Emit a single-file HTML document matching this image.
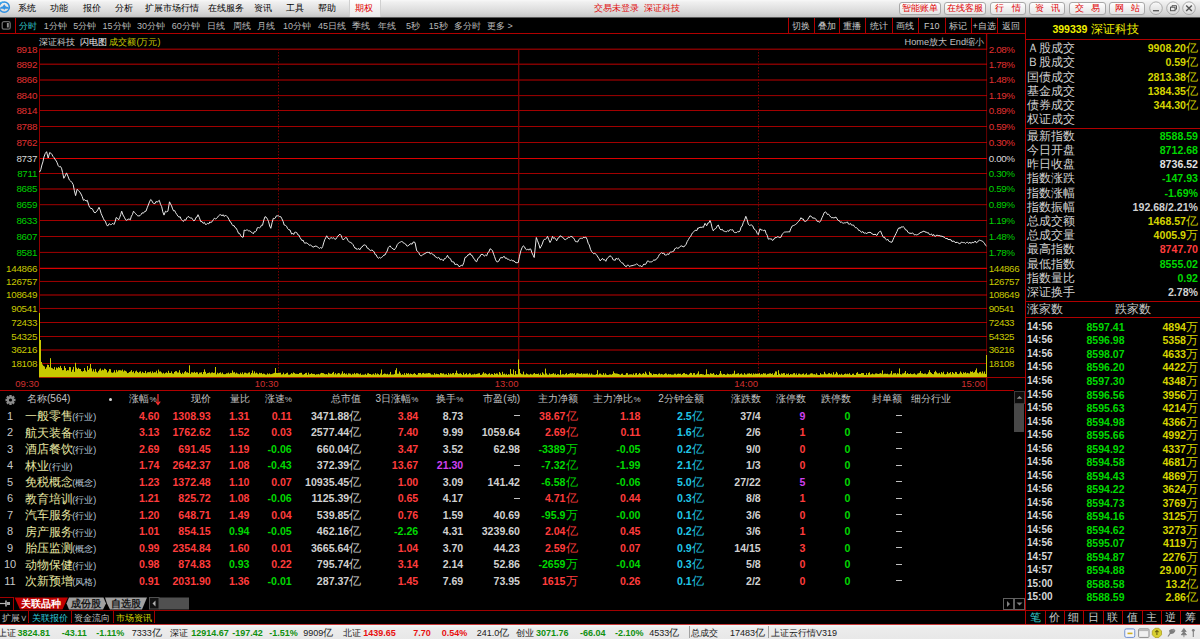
<!DOCTYPE html><html><head><meta charset="utf-8"><style>
html,body{margin:0;padding:0;background:#000;}
#r{position:relative;width:1200px;height:639px;overflow:hidden;background:#000;font-family:"Liberation Sans", sans-serif;}
.t{position:absolute;white-space:nowrap;}
.b{position:absolute;}

</style></head><body><div id="r">
<div class="b" style="left:0;top:0;width:1200px;height:17px;background:linear-gradient(#f8f8f8 0px,#f0f0f0 2px,#e0e0e0 9px,#d2d2d2 14px,#c4c4c4 17px);"></div>
<div class="b" style="left:0;top:17px;width:1200px;height:1px;background:#585858;"></div>
<svg class="b" style="left:0;top:0" width="16" height="17"><circle cx="4.25" cy="7.2" r="5.1" fill="none" stroke="#2e8fe0" stroke-width="1.5"/><path d="M-1 8.6 Q1 6.6 2.6 6.6 L4.25 4.3 L5.9 6.6 Q7.8 6.6 9.6 8.2 L9.6 8.8 L5.2 8.8 L4.25 10 L3.3 8.8 L-1 8.8 Z" fill="#3492e0"/><path d="M-1 3.5 Q1 2 3 2.2" stroke="#40b0f0" stroke-width="1.2" fill="none"/></svg>
<div class="t" style="left:18px;top:1.30px;color:#000000;font-size:9px;line-height:14px;">系统</div>
<div class="t" style="left:50px;top:1.30px;color:#000000;font-size:9px;line-height:14px;">功能</div>
<div class="t" style="left:82.5px;top:1.30px;color:#000000;font-size:9px;line-height:14px;">报价</div>
<div class="t" style="left:115px;top:1.30px;color:#000000;font-size:9px;line-height:14px;">分析</div>
<div class="t" style="left:145px;top:1.30px;color:#000000;font-size:9px;line-height:14px;">扩展市场行情</div>
<div class="t" style="left:208px;top:1.30px;color:#000000;font-size:9px;line-height:14px;">在线服务</div>
<div class="t" style="left:254px;top:1.30px;color:#000000;font-size:9px;line-height:14px;">资讯</div>
<div class="t" style="left:286px;top:1.30px;color:#000000;font-size:9px;line-height:14px;">工具</div>
<div class="t" style="left:318px;top:1.30px;color:#000000;font-size:9px;line-height:14px;">帮助</div>
<div class="b" style="left:349px;top:0px;width:30px;height:17px;background:linear-gradient(#ffffff,#e8e8e8);border-left:1px solid #d0d0d0;border-right:1px solid #d0d0d0;"></div>
<div class="t" style="left:355px;top:1.30px;color:#e00000;font-size:9px;line-height:14px;">期权</div>
<div class="t" style="left:537.00px;width:200px;top:1.30px;color:#e01010;font-size:9px;line-height:14px;text-align:center;">交易未登录&nbsp;&nbsp;深证科技</div>
<div class="b" style="left:899.3px;top:2px;width:40.0px;height:11px;border:1px solid #a8a8a8;border-radius:3px;background:linear-gradient(#ffffff,#e4e4e4);box-shadow:0 1px 0 #c8c8c8;"></div>
<div class="t" style="left:820.30px;width:200px;top:1.30px;color:#e00000;font-size:9px;line-height:14px;text-align:center;">智能账单</div>
<div class="b" style="left:944.4px;top:2px;width:39.9px;height:11px;border:1px solid #a8a8a8;border-radius:3px;background:linear-gradient(#ffffff,#e4e4e4);box-shadow:0 1px 0 #c8c8c8;"></div>
<div class="t" style="left:865.35px;width:200px;top:1.30px;color:#e00000;font-size:9px;line-height:14px;text-align:center;">在线客服</div>
<div class="b" style="left:989.7px;top:2px;width:34.3px;height:11px;border:1px solid #a8a8a8;border-radius:3px;background:linear-gradient(#ffffff,#e4e4e4);box-shadow:0 1px 0 #c8c8c8;"></div>
<div class="t" style="left:907.85px;width:200px;top:1.30px;color:#e00000;font-size:9px;line-height:14px;text-align:center;">行&nbsp;&nbsp;&nbsp;情</div>
<div class="b" style="left:1029.3px;top:2px;width:34.0px;height:11px;border:1px solid #a8a8a8;border-radius:3px;background:linear-gradient(#ffffff,#e4e4e4);box-shadow:0 1px 0 #c8c8c8;"></div>
<div class="t" style="left:947.30px;width:200px;top:1.30px;color:#e00000;font-size:9px;line-height:14px;text-align:center;">资&nbsp;&nbsp;&nbsp;讯</div>
<div class="b" style="left:1069.0px;top:2px;width:34.6px;height:11px;border:1px solid #a8a8a8;border-radius:3px;background:linear-gradient(#ffffff,#e4e4e4);box-shadow:0 1px 0 #c8c8c8;"></div>
<div class="t" style="left:987.30px;width:200px;top:1.30px;color:#e00000;font-size:9px;line-height:14px;text-align:center;">交&nbsp;&nbsp;&nbsp;易</div>
<div class="b" style="left:1109.3px;top:2px;width:34.0px;height:11px;border:1px solid #a8a8a8;border-radius:3px;background:linear-gradient(#ffffff,#e4e4e4);box-shadow:0 1px 0 #c8c8c8;"></div>
<div class="t" style="left:1027.30px;width:200px;top:1.30px;color:#e00000;font-size:9px;line-height:14px;text-align:center;">网&nbsp;&nbsp;&nbsp;站</div>
<svg class="b" style="left:1148.0px;top:0" width="16" height="17"><defs><linearGradient id="ggmin" x1="0" y1="0" x2="0" y2="1"><stop offset="0" stop-color="#fafafa"/><stop offset="1" stop-color="#d8d8d8"/></linearGradient></defs><g transform="translate(8,8.2)"><circle r="6.3" fill="url(#ggmin)" stroke="#9a9a9a" stroke-width="0.8"/><path d="M-3 2.5 H3" stroke="#555" stroke-width="1.3"/></g></svg>
<svg class="b" style="left:1164.7px;top:0" width="16" height="17"><defs><linearGradient id="ggres" x1="0" y1="0" x2="0" y2="1"><stop offset="0" stop-color="#fafafa"/><stop offset="1" stop-color="#d8d8d8"/></linearGradient></defs><g transform="translate(8,8.2)"><circle r="6.3" fill="url(#ggres)" stroke="#9a9a9a" stroke-width="0.8"/><rect x="-2.5" y="-1" width="4.5" height="3.5" fill="none" stroke="#555" stroke-width="1"/><path d="M-1 -1 V-2.5 H3.5 V1 H2" fill="none" stroke="#555" stroke-width="1"/></g></svg>
<svg class="b" style="left:1181.3px;top:0" width="16" height="17"><defs><linearGradient id="ggx" x1="0" y1="0" x2="0" y2="1"><stop offset="0" stop-color="#fafafa"/><stop offset="1" stop-color="#d8d8d8"/></linearGradient></defs><g transform="translate(8,8.2)"><circle r="6.3" fill="url(#ggx)" stroke="#9a9a9a" stroke-width="0.8"/><path d="M-2.8 -2.8 L2.8 2.8 M2.8 -2.8 L-2.8 2.8" stroke="#555" stroke-width="1.4"/></g></svg>
<div class="b" style="left:0;top:33px;width:1025px;height:1px;background:#b00000;"></div>
<div class="b" style="left:15px;top:18px;width:1px;height:15px;background:#b00000;"></div>
<svg class="b" style="left:0;top:17px" width="14" height="16"><rect x="2.2" y="4.6" width="8" height="7.6" rx="1.8" fill="none" stroke="#6c6c6c" stroke-width="1.3"/><rect x="6.9" y="6" width="1.9" height="4.5" fill="#909090"/></svg>
<div class="t" style="left:18.7px;top:18.50px;color:#30c8c8;font-size:9px;line-height:14px;">分时</div>
<div class="t" style="left:43.7px;top:18.50px;color:#b8b8b8;font-size:9px;line-height:14px;">1分钟</div>
<div class="t" style="left:73.3px;top:18.50px;color:#b8b8b8;font-size:9px;line-height:14px;">5分钟</div>
<div class="t" style="left:102.5px;top:18.50px;color:#b8b8b8;font-size:9px;line-height:14px;">15分钟</div>
<div class="t" style="left:137px;top:18.50px;color:#b8b8b8;font-size:9px;line-height:14px;">30分钟</div>
<div class="t" style="left:171.7px;top:18.50px;color:#b8b8b8;font-size:9px;line-height:14px;">60分钟</div>
<div class="t" style="left:206.5px;top:18.50px;color:#b8b8b8;font-size:9px;line-height:14px;">日线</div>
<div class="t" style="left:232.6px;top:18.50px;color:#b8b8b8;font-size:9px;line-height:14px;">周线</div>
<div class="t" style="left:257.4px;top:18.50px;color:#b8b8b8;font-size:9px;line-height:14px;">月线</div>
<div class="t" style="left:283px;top:18.50px;color:#b8b8b8;font-size:9px;line-height:14px;">10分钟</div>
<div class="t" style="left:317.9px;top:18.50px;color:#b8b8b8;font-size:9px;line-height:14px;">45日线</div>
<div class="t" style="left:351.7px;top:18.50px;color:#b8b8b8;font-size:9px;line-height:14px;">季线</div>
<div class="t" style="left:378.4px;top:18.50px;color:#b8b8b8;font-size:9px;line-height:14px;">年线</div>
<div class="t" style="left:405.9px;top:18.50px;color:#b8b8b8;font-size:9px;line-height:14px;">5秒</div>
<div class="t" style="left:428.7px;top:18.50px;color:#b8b8b8;font-size:9px;line-height:14px;">15秒</div>
<div class="t" style="left:453.5px;top:18.50px;color:#b8b8b8;font-size:9px;line-height:14px;">多分时</div>
<div class="t" style="left:487px;top:18.50px;color:#b8b8b8;font-size:9px;line-height:14px;">更多 &gt;</div>
<div class="b" style="left:787.8px;top:18px;width:1px;height:15px;background:#b00000;"></div>
<div class="t" style="left:700.80px;width:200px;top:18.50px;color:#c8c8c8;font-size:9px;line-height:14px;text-align:center;">切换</div>
<div class="b" style="left:813.8px;top:18px;width:1px;height:15px;background:#b00000;"></div>
<div class="t" style="left:726.55px;width:200px;top:18.50px;color:#c8c8c8;font-size:9px;line-height:14px;text-align:center;">叠加</div>
<div class="b" style="left:839.3px;top:18px;width:1px;height:15px;background:#b00000;"></div>
<div class="t" style="left:752.30px;width:200px;top:18.50px;color:#c8c8c8;font-size:9px;line-height:14px;text-align:center;">重播</div>
<div class="b" style="left:865.3px;top:18px;width:1px;height:15px;background:#b00000;"></div>
<div class="t" style="left:778.85px;width:200px;top:18.50px;color:#c8c8c8;font-size:9px;line-height:14px;text-align:center;">统计</div>
<div class="b" style="left:892.4px;top:18px;width:1px;height:15px;background:#b00000;"></div>
<div class="t" style="left:805.40px;width:200px;top:18.50px;color:#c8c8c8;font-size:9px;line-height:14px;text-align:center;">画线</div>
<div class="b" style="left:918.4px;top:18px;width:1px;height:15px;background:#b00000;"></div>
<div class="t" style="left:831.75px;width:200px;top:18.50px;color:#c8c8c8;font-size:9px;line-height:14px;text-align:center;">F10</div>
<div class="b" style="left:945.1px;top:18px;width:1px;height:15px;background:#b00000;"></div>
<div class="t" style="left:858.10px;width:200px;top:18.50px;color:#c8c8c8;font-size:9px;line-height:14px;text-align:center;">标记</div>
<div class="b" style="left:971.1px;top:18px;width:1px;height:15px;background:#b00000;"></div>
<div class="t" style="left:884.10px;width:200px;top:18.50px;color:#c8c8c8;font-size:9px;line-height:14px;text-align:center;">+自选</div>
<div class="b" style="left:997.1px;top:18px;width:1px;height:15px;background:#b00000;"></div>
<div class="t" style="left:911.15px;width:200px;top:18.50px;color:#c8c8c8;font-size:9px;line-height:14px;text-align:center;">返回</div>
<div class="b" style="left:1025px;top:18px;width:1px;height:606px;background:#b00000;"></div>
<div class="b" style="left:1025px;top:39px;width:175px;height:1px;background:#b00000;"></div>
<div class="t" style="left:1052.4px;top:21.50px;color:#f0f000;font-size:12px;line-height:14px;"><b style="font-size:10.5px">399339</b> 深证科技</div>
<div class="t" style="left:1027px;top:41.30px;color:#d0d0d0;font-size:12px;line-height:14px;">Ａ股成交</div>
<div class="t" style="right:2.00px;top:41.30px;color:#d4d400;font-size:11px;line-height:14px;text-align:right;"><b style="font-size:10.6px">9908.20</b><span style="font-size:12px">亿</span></div>
<div class="t" style="left:1027px;top:55.40px;color:#d0d0d0;font-size:12px;line-height:14px;">Ｂ股成交</div>
<div class="t" style="right:2.00px;top:55.40px;color:#d4d400;font-size:11px;line-height:14px;text-align:right;"><b style="font-size:10.6px">0.59</b><span style="font-size:12px">亿</span></div>
<div class="t" style="left:1027px;top:69.50px;color:#d0d0d0;font-size:12px;line-height:14px;">国债成交</div>
<div class="t" style="right:2.00px;top:69.50px;color:#d4d400;font-size:11px;line-height:14px;text-align:right;"><b style="font-size:10.6px">2813.38</b><span style="font-size:12px">亿</span></div>
<div class="t" style="left:1027px;top:83.60px;color:#d0d0d0;font-size:12px;line-height:14px;">基金成交</div>
<div class="t" style="right:2.00px;top:83.60px;color:#d4d400;font-size:11px;line-height:14px;text-align:right;"><b style="font-size:10.6px">1384.35</b><span style="font-size:12px">亿</span></div>
<div class="t" style="left:1027px;top:97.70px;color:#d0d0d0;font-size:12px;line-height:14px;">债券成交</div>
<div class="t" style="right:2.00px;top:97.70px;color:#d4d400;font-size:11px;line-height:14px;text-align:right;"><b style="font-size:10.6px">344.30</b><span style="font-size:12px">亿</span></div>
<div class="t" style="left:1027px;top:111.80px;color:#d0d0d0;font-size:12px;line-height:14px;">权证成交</div>
<div class="b" style="left:1025px;top:128px;width:175px;height:1px;background:#b00000;"></div>
<div class="t" style="left:1027px;top:128.80px;color:#d0d0d0;font-size:12px;line-height:14px;">最新指数</div>
<div class="t" style="right:2.00px;top:128.80px;color:#00d800;font-size:10.6px;line-height:14px;text-align:right;font-weight:bold;">8588.59</div>
<div class="t" style="left:1027px;top:143.00px;color:#d0d0d0;font-size:12px;line-height:14px;">今日开盘</div>
<div class="t" style="right:2.00px;top:143.00px;color:#00d800;font-size:10.6px;line-height:14px;text-align:right;font-weight:bold;">8712.68</div>
<div class="t" style="left:1027px;top:157.20px;color:#d0d0d0;font-size:12px;line-height:14px;">昨日收盘</div>
<div class="t" style="right:2.00px;top:157.20px;color:#e0e0e0;font-size:10.6px;line-height:14px;text-align:right;font-weight:bold;">8736.52</div>
<div class="t" style="left:1027px;top:171.40px;color:#d0d0d0;font-size:12px;line-height:14px;">指数涨跌</div>
<div class="t" style="right:2.00px;top:171.40px;color:#00d800;font-size:10.6px;line-height:14px;text-align:right;font-weight:bold;">-147.93</div>
<div class="t" style="left:1027px;top:185.60px;color:#d0d0d0;font-size:12px;line-height:14px;">指数涨幅</div>
<div class="t" style="right:2.00px;top:185.60px;color:#00d800;font-size:10.6px;line-height:14px;text-align:right;font-weight:bold;">-1.69%</div>
<div class="t" style="left:1027px;top:199.80px;color:#d0d0d0;font-size:12px;line-height:14px;">指数振幅</div>
<div class="t" style="right:2.00px;top:199.80px;color:#d0d0d0;font-size:10.6px;line-height:14px;text-align:right;font-weight:bold;">192.68/2.21%</div>
<div class="t" style="left:1027px;top:214.00px;color:#d0d0d0;font-size:12px;line-height:14px;">总成交额</div>
<div class="t" style="right:2.00px;top:214.00px;color:#d4d400;font-size:11px;line-height:14px;text-align:right;"><b style="font-size:10.6px">1468.57</b><span style="font-size:12px">亿</span></div>
<div class="t" style="left:1027px;top:228.20px;color:#d0d0d0;font-size:12px;line-height:14px;">总成交量</div>
<div class="t" style="right:2.00px;top:228.20px;color:#d4d400;font-size:11px;line-height:14px;text-align:right;"><b style="font-size:10.6px">4005.9</b><span style="font-size:12px">万</span></div>
<div class="t" style="left:1027px;top:242.40px;color:#d0d0d0;font-size:12px;line-height:14px;">最高指数</div>
<div class="t" style="right:2.00px;top:242.40px;color:#ff3c3c;font-size:10.6px;line-height:14px;text-align:right;font-weight:bold;">8747.70</div>
<div class="t" style="left:1027px;top:256.60px;color:#d0d0d0;font-size:12px;line-height:14px;">最低指数</div>
<div class="t" style="right:2.00px;top:256.60px;color:#00d800;font-size:10.6px;line-height:14px;text-align:right;font-weight:bold;">8555.02</div>
<div class="t" style="left:1027px;top:270.80px;color:#d0d0d0;font-size:12px;line-height:14px;">指数量比</div>
<div class="t" style="right:2.00px;top:270.80px;color:#00d800;font-size:10.6px;line-height:14px;text-align:right;font-weight:bold;">0.92</div>
<div class="t" style="left:1027px;top:285.00px;color:#d0d0d0;font-size:12px;line-height:14px;">深证换手</div>
<div class="t" style="right:2.00px;top:285.00px;color:#d0d0d0;font-size:10.6px;line-height:14px;text-align:right;font-weight:bold;">2.78%</div>
<div class="b" style="left:1025px;top:301px;width:175px;height:1px;background:#b00000;"></div>
<div class="t" style="left:1027px;top:302.20px;color:#c8c8c8;font-size:12px;line-height:14px;">涨家数</div>
<div class="t" style="left:1115px;top:302.20px;color:#c8c8c8;font-size:12px;line-height:14px;">跌家数</div>
<div class="b" style="left:1025px;top:317px;width:175px;height:1px;background:#b00000;"></div>
<div class="t" style="left:1027px;top:319.90px;color:#d8d8d8;font-size:10px;line-height:14px;font-weight:bold;">14:56</div>
<div class="t" style="right:75.50px;top:319.90px;color:#00d800;font-size:10.5px;line-height:14px;text-align:right;font-weight:bold;">8597.41</div>
<div class="t" style="right:2.00px;top:319.90px;color:#d4d400;font-size:11px;line-height:14px;text-align:right;"><b style="font-size:10.6px">4894</b><span style="font-size:12px">万</span></div>
<div class="t" style="left:1027px;top:333.42px;color:#d8d8d8;font-size:10px;line-height:14px;font-weight:bold;">14:56</div>
<div class="t" style="right:75.50px;top:333.42px;color:#00d800;font-size:10.5px;line-height:14px;text-align:right;font-weight:bold;">8596.98</div>
<div class="t" style="right:2.00px;top:333.42px;color:#d4d400;font-size:11px;line-height:14px;text-align:right;"><b style="font-size:10.6px">5358</b><span style="font-size:12px">万</span></div>
<div class="t" style="left:1027px;top:346.95px;color:#d8d8d8;font-size:10px;line-height:14px;font-weight:bold;">14:56</div>
<div class="t" style="right:75.50px;top:346.95px;color:#00d800;font-size:10.5px;line-height:14px;text-align:right;font-weight:bold;">8598.07</div>
<div class="t" style="right:2.00px;top:346.95px;color:#d4d400;font-size:11px;line-height:14px;text-align:right;"><b style="font-size:10.6px">4633</b><span style="font-size:12px">万</span></div>
<div class="t" style="left:1027px;top:360.47px;color:#d8d8d8;font-size:10px;line-height:14px;font-weight:bold;">14:56</div>
<div class="t" style="right:75.50px;top:360.47px;color:#00d800;font-size:10.5px;line-height:14px;text-align:right;font-weight:bold;">8596.20</div>
<div class="t" style="right:2.00px;top:360.47px;color:#d4d400;font-size:11px;line-height:14px;text-align:right;"><b style="font-size:10.6px">4422</b><span style="font-size:12px">万</span></div>
<div class="t" style="left:1027px;top:374.00px;color:#d8d8d8;font-size:10px;line-height:14px;font-weight:bold;">14:56</div>
<div class="t" style="right:75.50px;top:374.00px;color:#00d800;font-size:10.5px;line-height:14px;text-align:right;font-weight:bold;">8597.30</div>
<div class="t" style="right:2.00px;top:374.00px;color:#d4d400;font-size:11px;line-height:14px;text-align:right;"><b style="font-size:10.6px">4348</b><span style="font-size:12px">万</span></div>
<div class="t" style="left:1027px;top:387.52px;color:#d8d8d8;font-size:10px;line-height:14px;font-weight:bold;">14:56</div>
<div class="t" style="right:75.50px;top:387.52px;color:#00d800;font-size:10.5px;line-height:14px;text-align:right;font-weight:bold;">8596.56</div>
<div class="t" style="right:2.00px;top:387.52px;color:#d4d400;font-size:11px;line-height:14px;text-align:right;"><b style="font-size:10.6px">3956</b><span style="font-size:12px">万</span></div>
<div class="t" style="left:1027px;top:401.05px;color:#d8d8d8;font-size:10px;line-height:14px;font-weight:bold;">14:56</div>
<div class="t" style="right:75.50px;top:401.05px;color:#00d800;font-size:10.5px;line-height:14px;text-align:right;font-weight:bold;">8595.63</div>
<div class="t" style="right:2.00px;top:401.05px;color:#d4d400;font-size:11px;line-height:14px;text-align:right;"><b style="font-size:10.6px">4214</b><span style="font-size:12px">万</span></div>
<div class="t" style="left:1027px;top:414.57px;color:#d8d8d8;font-size:10px;line-height:14px;font-weight:bold;">14:56</div>
<div class="t" style="right:75.50px;top:414.57px;color:#00d800;font-size:10.5px;line-height:14px;text-align:right;font-weight:bold;">8594.98</div>
<div class="t" style="right:2.00px;top:414.57px;color:#d4d400;font-size:11px;line-height:14px;text-align:right;"><b style="font-size:10.6px">4366</b><span style="font-size:12px">万</span></div>
<div class="t" style="left:1027px;top:428.10px;color:#d8d8d8;font-size:10px;line-height:14px;font-weight:bold;">14:56</div>
<div class="t" style="right:75.50px;top:428.10px;color:#00d800;font-size:10.5px;line-height:14px;text-align:right;font-weight:bold;">8595.66</div>
<div class="t" style="right:2.00px;top:428.10px;color:#d4d400;font-size:11px;line-height:14px;text-align:right;"><b style="font-size:10.6px">4992</b><span style="font-size:12px">万</span></div>
<div class="t" style="left:1027px;top:441.62px;color:#d8d8d8;font-size:10px;line-height:14px;font-weight:bold;">14:56</div>
<div class="t" style="right:75.50px;top:441.62px;color:#00d800;font-size:10.5px;line-height:14px;text-align:right;font-weight:bold;">8594.92</div>
<div class="t" style="right:2.00px;top:441.62px;color:#d4d400;font-size:11px;line-height:14px;text-align:right;"><b style="font-size:10.6px">4337</b><span style="font-size:12px">万</span></div>
<div class="t" style="left:1027px;top:455.15px;color:#d8d8d8;font-size:10px;line-height:14px;font-weight:bold;">14:56</div>
<div class="t" style="right:75.50px;top:455.15px;color:#00d800;font-size:10.5px;line-height:14px;text-align:right;font-weight:bold;">8594.58</div>
<div class="t" style="right:2.00px;top:455.15px;color:#d4d400;font-size:11px;line-height:14px;text-align:right;"><b style="font-size:10.6px">4681</b><span style="font-size:12px">万</span></div>
<div class="t" style="left:1027px;top:468.67px;color:#d8d8d8;font-size:10px;line-height:14px;font-weight:bold;">14:56</div>
<div class="t" style="right:75.50px;top:468.67px;color:#00d800;font-size:10.5px;line-height:14px;text-align:right;font-weight:bold;">8594.43</div>
<div class="t" style="right:2.00px;top:468.67px;color:#d4d400;font-size:11px;line-height:14px;text-align:right;"><b style="font-size:10.6px">4869</b><span style="font-size:12px">万</span></div>
<div class="t" style="left:1027px;top:482.20px;color:#d8d8d8;font-size:10px;line-height:14px;font-weight:bold;">14:56</div>
<div class="t" style="right:75.50px;top:482.20px;color:#00d800;font-size:10.5px;line-height:14px;text-align:right;font-weight:bold;">8594.22</div>
<div class="t" style="right:2.00px;top:482.20px;color:#d4d400;font-size:11px;line-height:14px;text-align:right;"><b style="font-size:10.6px">3624</b><span style="font-size:12px">万</span></div>
<div class="t" style="left:1027px;top:495.73px;color:#d8d8d8;font-size:10px;line-height:14px;font-weight:bold;">14:56</div>
<div class="t" style="right:75.50px;top:495.73px;color:#00d800;font-size:10.5px;line-height:14px;text-align:right;font-weight:bold;">8594.73</div>
<div class="t" style="right:2.00px;top:495.73px;color:#d4d400;font-size:11px;line-height:14px;text-align:right;"><b style="font-size:10.6px">3769</b><span style="font-size:12px">万</span></div>
<div class="t" style="left:1027px;top:509.25px;color:#d8d8d8;font-size:10px;line-height:14px;font-weight:bold;">14:56</div>
<div class="t" style="right:75.50px;top:509.25px;color:#00d800;font-size:10.5px;line-height:14px;text-align:right;font-weight:bold;">8594.16</div>
<div class="t" style="right:2.00px;top:509.25px;color:#d4d400;font-size:11px;line-height:14px;text-align:right;"><b style="font-size:10.6px">3125</b><span style="font-size:12px">万</span></div>
<div class="t" style="left:1027px;top:522.77px;color:#d8d8d8;font-size:10px;line-height:14px;font-weight:bold;">14:56</div>
<div class="t" style="right:75.50px;top:522.77px;color:#00d800;font-size:10.5px;line-height:14px;text-align:right;font-weight:bold;">8594.62</div>
<div class="t" style="right:2.00px;top:522.77px;color:#d4d400;font-size:11px;line-height:14px;text-align:right;"><b style="font-size:10.6px">3273</b><span style="font-size:12px">万</span></div>
<div class="t" style="left:1027px;top:536.30px;color:#d8d8d8;font-size:10px;line-height:14px;font-weight:bold;">14:56</div>
<div class="t" style="right:75.50px;top:536.30px;color:#00d800;font-size:10.5px;line-height:14px;text-align:right;font-weight:bold;">8595.07</div>
<div class="t" style="right:2.00px;top:536.30px;color:#d4d400;font-size:11px;line-height:14px;text-align:right;"><b style="font-size:10.6px">4119</b><span style="font-size:12px">万</span></div>
<div class="t" style="left:1027px;top:549.83px;color:#d8d8d8;font-size:10px;line-height:14px;font-weight:bold;">14:57</div>
<div class="t" style="right:75.50px;top:549.83px;color:#00d800;font-size:10.5px;line-height:14px;text-align:right;font-weight:bold;">8594.87</div>
<div class="t" style="right:2.00px;top:549.83px;color:#d4d400;font-size:11px;line-height:14px;text-align:right;"><b style="font-size:10.6px">2276</b><span style="font-size:12px">万</span></div>
<div class="t" style="left:1027px;top:563.35px;color:#d8d8d8;font-size:10px;line-height:14px;font-weight:bold;">14:57</div>
<div class="t" style="right:75.50px;top:563.35px;color:#00d800;font-size:10.5px;line-height:14px;text-align:right;font-weight:bold;">8594.88</div>
<div class="t" style="right:2.00px;top:563.35px;color:#d4d400;font-size:11px;line-height:14px;text-align:right;"><b style="font-size:10.6px">29.00</b><span style="font-size:12px">万</span></div>
<div class="t" style="left:1027px;top:576.88px;color:#d8d8d8;font-size:10px;line-height:14px;font-weight:bold;">15:00</div>
<div class="t" style="right:75.50px;top:576.88px;color:#00d800;font-size:10.5px;line-height:14px;text-align:right;font-weight:bold;">8588.58</div>
<div class="t" style="right:2.00px;top:576.88px;color:#d4d400;font-size:11px;line-height:14px;text-align:right;"><b style="font-size:10.6px">13.2</b><span style="font-size:12px">亿</span></div>
<div class="t" style="left:1027px;top:590.40px;color:#d8d8d8;font-size:10px;line-height:14px;font-weight:bold;">15:00</div>
<div class="t" style="right:75.50px;top:590.40px;color:#00d800;font-size:10.5px;line-height:14px;text-align:right;font-weight:bold;">8588.59</div>
<div class="t" style="right:2.00px;top:590.40px;color:#d4d400;font-size:11px;line-height:14px;text-align:right;"><b style="font-size:10.6px">2.86</b><span style="font-size:12px">亿</span></div>
<div class="b" style="left:1025px;top:610px;width:175px;height:1px;background:#b00000;"></div>
<div class="b" style="left:1044.5px;top:610px;width:1px;height:14px;background:#b00000;"></div>
<div class="t" style="left:935.10px;width:200px;top:610.30px;color:#30c8c8;font-size:11px;line-height:14px;text-align:center;">笔</div>
<div class="b" style="left:1063.9px;top:610px;width:1px;height:14px;background:#b00000;"></div>
<div class="t" style="left:954.50px;width:200px;top:610.30px;color:#c8c8c8;font-size:11px;line-height:14px;text-align:center;">价</div>
<div class="b" style="left:1083.3px;top:610px;width:1px;height:14px;background:#b00000;"></div>
<div class="t" style="left:973.90px;width:200px;top:610.30px;color:#c8c8c8;font-size:11px;line-height:14px;text-align:center;">细</div>
<div class="b" style="left:1102.7px;top:610px;width:1px;height:14px;background:#b00000;"></div>
<div class="t" style="left:993.30px;width:200px;top:610.30px;color:#c8c8c8;font-size:11px;line-height:14px;text-align:center;">日</div>
<div class="b" style="left:1122.1px;top:610px;width:1px;height:14px;background:#b00000;"></div>
<div class="t" style="left:1012.70px;width:200px;top:610.30px;color:#c8c8c8;font-size:11px;line-height:14px;text-align:center;">联</div>
<div class="b" style="left:1141.5px;top:610px;width:1px;height:14px;background:#b00000;"></div>
<div class="t" style="left:1032.10px;width:200px;top:610.30px;color:#c8c8c8;font-size:11px;line-height:14px;text-align:center;">值</div>
<div class="b" style="left:1160.9px;top:610px;width:1px;height:14px;background:#b00000;"></div>
<div class="t" style="left:1051.50px;width:200px;top:610.30px;color:#c8c8c8;font-size:11px;line-height:14px;text-align:center;">主</div>
<div class="b" style="left:1180.3px;top:610px;width:1px;height:14px;background:#b00000;"></div>
<div class="t" style="left:1070.90px;width:200px;top:610.30px;color:#c8c8c8;font-size:11px;line-height:14px;text-align:center;">逆</div>
<div class="b" style="left:1199.7px;top:610px;width:1px;height:14px;background:#b00000;"></div>
<div class="t" style="left:1090.30px;width:200px;top:610.30px;color:#c8c8c8;font-size:11px;line-height:14px;text-align:center;">筹</div>
<svg class="b" style="left:0;top:0" width="1200" height="639">
<line x1="39" y1="49.30" x2="987" y2="49.30" stroke="#800000" stroke-width="1.4"/>
<line x1="39" y1="64.30" x2="987" y2="64.30" stroke="#800000" stroke-width="1.4"/>
<line x1="39" y1="80.00" x2="987" y2="80.00" stroke="#800000" stroke-width="1.4"/>
<line x1="39" y1="95.60" x2="987" y2="95.60" stroke="#a00000" stroke-width="1.0"/>
<line x1="39" y1="110.50" x2="987" y2="110.50" stroke="#a00000" stroke-width="1.0"/>
<line x1="39" y1="126.50" x2="987" y2="126.50" stroke="#a00000" stroke-width="1.0"/>
<line x1="39" y1="142.50" x2="987" y2="142.50" stroke="#a00000" stroke-width="1.0"/>
<line x1="39" y1="158.50" x2="987" y2="158.50" stroke="#d80000" stroke-width="1.2"/>
<line x1="39" y1="173.50" x2="987" y2="173.50" stroke="#a00000" stroke-width="1.0"/>
<line x1="39" y1="189.00" x2="987" y2="189.00" stroke="#800000" stroke-width="1.4"/>
<line x1="39" y1="204.70" x2="987" y2="204.70" stroke="#a00000" stroke-width="1.0"/>
<line x1="39" y1="220.50" x2="987" y2="220.50" stroke="#a00000" stroke-width="1.0"/>
<line x1="39" y1="236.50" x2="987" y2="236.50" stroke="#a00000" stroke-width="1.0"/>
<line x1="39" y1="252.40" x2="987" y2="252.40" stroke="#a00000" stroke-width="1.0"/>
<line x1="39" y1="268.30" x2="987" y2="268.30" stroke="#d80000" stroke-width="1.2"/>
<line x1="39" y1="281.45" x2="987" y2="281.45" stroke="#a00000" stroke-width="1.0"/>
<line x1="39" y1="295.00" x2="987" y2="295.00" stroke="#800000" stroke-width="1.4"/>
<line x1="39" y1="308.45" x2="987" y2="308.45" stroke="#a00000" stroke-width="1.0"/>
<line x1="39" y1="322.50" x2="987" y2="322.50" stroke="#a00000" stroke-width="1.0"/>
<line x1="39" y1="336.50" x2="987" y2="336.50" stroke="#a00000" stroke-width="1.0"/>
<line x1="39" y1="350.00" x2="987" y2="350.00" stroke="#800000" stroke-width="1.4"/>
<line x1="39" y1="363.50" x2="987" y2="363.50" stroke="#a00000" stroke-width="1.0"/>
<line x1="39.5" y1="49" x2="39.5" y2="377.6" stroke="#900000" stroke-width="1"/>
<line x1="986.6" y1="34" x2="986.6" y2="49.5" stroke="#a00000" stroke-width="1.3"/>
<line x1="986.6" y1="49.5" x2="986.6" y2="377.6" stroke="#d00000" stroke-width="1" stroke-dasharray="1 1"/>
<line x1="986.6" y1="377.6" x2="986.6" y2="391" stroke="#a00000" stroke-width="1.3"/>
<line x1="39" y1="377.5" x2="1025" y2="377.5" stroke="#a00000" stroke-width="1.2"/>
<line x1="518.7" y1="49" x2="518.7" y2="377.5" stroke="#800000" stroke-width="1.3"/>
<line x1="278.5" y1="49" x2="278.5" y2="377.5" stroke="#780000" stroke-width="1" stroke-dasharray="1.5 1.5"/>
<line x1="758.5" y1="49" x2="758.5" y2="377.5" stroke="#780000" stroke-width="1" stroke-dasharray="1.5 1.5"/>
<path d="M39.5 377.2V313.0 M40.5 377.2V340.0 M41.5 377.2V362.0 M42.5 377.2V364.5 M43.5 377.2V365.8 M44.5 377.2V366.5 M45.5 377.2V368.8 M46.5 377.2V367.3 M47.5 377.2V364.7 M48.5 377.2V365.0 M49.5 377.2V367.2 M50.5 377.2V358.2 M51.5 377.2V367.8 M52.5 377.2V368.3 M53.5 377.2V369.1 M54.5 377.2V367.1 M55.5 377.2V369.8 M56.5 377.2V367.5 M57.5 377.2V368.3 M58.5 377.2V367.0 M59.5 377.2V367.8 M60.5 377.2V365.9 M61.5 377.2V368.1 M62.5 377.2V370.2 M63.5 377.2V370.1 M64.5 377.2V366.1 M65.5 377.2V368.0 M66.5 377.2V370.8 M67.5 377.2V370.1 M68.5 377.2V370.3 M69.5 377.2V367.0 M70.5 377.2V367.2 M71.5 377.2V371.8 M72.5 377.2V369.6 M73.5 377.2V366.9 M74.5 377.2V371.8 M75.5 377.2V362.8 M76.5 377.2V367.7 M77.5 377.2V369.1 M78.5 377.2V367.9 M79.5 377.2V368.9 M80.5 377.2V369.0 M81.5 377.2V371.1 M82.5 377.2V371.6 M83.5 377.2V371.0 M84.5 377.2V368.0 M85.5 377.2V370.4 M86.5 377.2V371.6 M87.5 377.2V366.0 M88.5 377.2V370.0 M89.5 377.2V368.4 M90.5 377.2V364.0 M91.5 377.2V368.4 M92.5 377.2V371.4 M93.5 377.2V369.4 M94.5 377.2V371.7 M95.5 377.2V368.9 M96.5 377.2V371.7 M97.5 377.2V372.6 M98.5 377.2V371.1 M99.5 377.2V369.5 M100.5 377.2V368.5 M101.5 377.2V370.6 M102.5 377.2V369.7 M103.5 377.2V370.2 M104.5 377.2V368.6 M105.5 377.2V369.1 M106.5 377.2V370.1 M107.5 377.2V372.5 M108.5 377.2V371.3 M109.5 377.2V369.1 M110.5 377.2V369.2 M111.5 377.2V372.4 M112.5 377.2V372.8 M113.5 377.2V372.3 M114.5 377.2V370.3 M115.5 377.2V372.5 M116.5 377.2V369.9 M117.5 377.2V371.6 M118.5 377.2V370.3 M119.5 377.2V370.2 M120.5 377.2V370.3 M121.5 377.2V370.6 M122.5 377.2V369.6 M123.5 377.2V371.5 M124.5 377.2V370.4 M125.5 377.2V370.9 M126.5 377.2V371.6 M127.5 377.2V373.1 M128.5 377.2V372.8 M129.5 377.2V372.0 M130.5 377.2V371.4 M131.5 377.2V370.1 M132.5 377.2V372.2 M133.5 377.2V371.2 M134.5 377.2V373.2 M135.5 377.2V371.4 M136.5 377.2V370.6 M137.5 377.2V372.0 M138.5 377.2V372.8 M139.5 377.2V371.8 M140.5 377.2V371.3 M141.5 377.2V373.3 M142.5 377.2V371.8 M143.5 377.2V372.7 M144.5 377.2V373.0 M145.5 377.2V370.9 M146.5 377.2V373.3 M147.5 377.2V372.3 M148.5 377.2V372.2 M149.5 377.2V372.2 M150.5 377.2V371.5 M151.5 377.2V373.2 M152.5 377.2V371.4 M153.5 377.2V372.8 M154.5 377.2V372.2 M155.5 377.2V372.4 M156.5 377.2V370.7 M157.5 377.2V373.3 M158.5 377.2V369.6 M159.5 377.2V371.6 M160.5 377.2V371.4 M161.5 377.2V372.4 M162.5 377.2V373.5 M163.5 377.2V372.7 M164.5 377.2V373.7 M165.5 377.2V372.9 M166.5 377.2V372.3 M167.5 377.2V373.1 M168.5 377.2V370.8 M169.5 377.2V372.9 M170.5 377.2V373.0 M171.5 377.2V371.4 M172.5 377.2V373.4 M173.5 377.2V373.7 M174.5 377.2V372.0 M175.5 377.2V371.2 M176.5 377.2V371.2 M177.5 377.2V372.5 M178.5 377.2V372.5 M179.5 377.2V370.2 M180.5 377.2V372.8 M181.5 377.2V374.0 M182.5 377.2V372.6 M183.5 377.2V373.7 M184.5 377.2V372.2 M185.5 377.2V371.0 M186.5 377.2V372.4 M187.5 377.2V372.3 M188.5 377.2V373.0 M189.5 377.2V365.3 M190.5 377.2V373.8 M191.5 377.2V372.3 M192.5 377.2V372.4 M193.5 377.2V372.7 M194.5 377.2V371.8 M195.5 377.2V372.9 M196.5 377.2V372.2 M197.5 377.2V372.4 M198.5 377.2V374.1 M199.5 377.2V372.7 M200.5 377.2V372.6 M201.5 377.2V372.3 M202.5 377.2V374.1 M203.5 377.2V372.0 M204.5 377.2V369.4 M205.5 377.2V371.8 M206.5 377.2V373.8 M207.5 377.2V373.1 M208.5 377.2V372.9 M209.5 377.2V372.4 M210.5 377.2V373.4 M211.5 377.2V372.6 M212.5 377.2V372.4 M213.5 377.2V373.0 M214.5 377.2V372.7 M215.5 377.2V367.0 M216.5 377.2V374.3 M217.5 377.2V372.7 M218.5 377.2V373.5 M219.5 377.2V372.9 M220.5 377.2V372.3 M221.5 377.2V373.7 M222.5 377.2V372.6 M223.5 377.2V374.1 M224.5 377.2V374.2 M225.5 377.2V374.1 M226.5 377.2V373.3 M227.5 377.2V373.4 M228.5 377.2V372.6 M229.5 377.2V373.8 M230.5 377.2V372.9 M231.5 377.2V373.1 M232.5 377.2V370.5 M233.5 377.2V372.5 M234.5 377.2V372.2 M235.5 377.2V373.6 M236.5 377.2V372.7 M237.5 377.2V373.5 M238.5 377.2V373.8 M239.5 377.2V374.2 M240.5 377.2V372.7 M241.5 377.2V373.9 M242.5 377.2V372.4 M243.5 377.2V374.2 M244.5 377.2V372.7 M245.5 377.2V372.7 M246.5 377.2V373.3 M247.5 377.2V373.5 M248.5 377.2V372.7 M249.5 377.2V372.3 M250.5 377.2V374.5 M251.5 377.2V373.0 M252.5 377.2V370.5 M253.5 377.2V373.4 M254.5 377.2V371.4 M255.5 377.2V373.4 M256.5 377.2V372.7 M257.5 377.2V373.5 M258.5 377.2V374.2 M259.5 377.2V372.8 M260.5 377.2V373.3 M261.5 377.2V372.9 M262.5 377.2V374.1 M263.5 377.2V373.5 M264.5 377.2V373.8 M265.5 377.2V374.5 M266.5 377.2V374.6 M267.5 377.2V373.3 M268.5 377.2V374.2 M269.5 377.2V373.4 M270.5 377.2V374.2 M271.5 377.2V374.1 M272.5 377.2V373.7 M273.5 377.2V373.3 M274.5 377.2V372.8 M275.5 377.2V368.0 M276.5 377.2V373.0 M277.5 377.2V373.1 M278.5 377.2V372.8 M279.5 377.2V372.8 M280.5 377.2V372.7 M281.5 377.2V374.5 M282.5 377.2V374.2 M283.5 377.2V372.7 M284.5 377.2V374.3 M285.5 377.2V373.9 M286.5 377.2V373.2 M287.5 377.2V372.7 M288.5 377.2V374.6 M289.5 377.2V374.7 M290.5 377.2V374.2 M291.5 377.2V373.1 M292.5 377.2V373.7 M293.5 377.2V372.4 M294.5 377.2V373.1 M295.5 377.2V373.8 M296.5 377.2V373.8 M297.5 377.2V373.9 M298.5 377.2V374.0 M299.5 377.2V373.0 M300.5 377.2V372.8 M301.5 377.2V372.8 M302.5 377.2V374.5 M303.5 377.2V374.6 M304.5 377.2V374.0 M305.5 377.2V373.1 M306.5 377.2V372.8 M307.5 377.2V374.8 M308.5 377.2V372.7 M309.5 377.2V374.3 M310.5 377.2V374.0 M311.5 377.2V373.2 M312.5 377.2V373.9 M313.5 377.2V373.9 M314.5 377.2V373.9 M315.5 377.2V374.8 M316.5 377.2V374.2 M317.5 377.2V374.3 M318.5 377.2V373.9 M319.5 377.2V374.5 M320.5 377.2V373.5 M321.5 377.2V372.9 M322.5 377.2V373.1 M323.5 377.2V373.2 M324.5 377.2V373.9 M325.5 377.2V374.3 M326.5 377.2V374.0 M327.5 377.2V374.5 M328.5 377.2V372.8 M329.5 377.2V373.5 M330.5 377.2V373.8 M331.5 377.2V373.9 M332.5 377.2V372.9 M333.5 377.2V371.9 M334.5 377.2V374.3 M335.5 377.2V373.1 M336.5 377.2V374.4 M337.5 377.2V373.6 M338.5 377.2V373.0 M339.5 377.2V373.3 M340.5 377.2V374.6 M341.5 377.2V373.6 M342.5 377.2V371.4 M343.5 377.2V373.8 M344.5 377.2V373.0 M345.5 377.2V374.2 M346.5 377.2V373.5 M347.5 377.2V374.7 M348.5 377.2V373.3 M349.5 377.2V373.5 M350.5 377.2V373.7 M351.5 377.2V374.8 M352.5 377.2V373.7 M353.5 377.2V374.2 M354.5 377.2V372.9 M355.5 377.2V374.2 M356.5 377.2V373.2 M357.5 377.2V373.3 M358.5 377.2V373.7 M359.5 377.2V374.3 M360.5 377.2V373.4 M361.5 377.2V374.9 M362.5 377.2V374.6 M363.5 377.2V374.7 M364.5 377.2V374.6 M365.5 377.2V373.8 M366.5 377.2V374.9 M367.5 377.2V373.4 M368.5 377.2V373.2 M369.5 377.2V374.0 M370.5 377.2V374.0 M371.5 377.2V374.7 M372.5 377.2V374.4 M373.5 377.2V373.7 M374.5 377.2V374.7 M375.5 377.2V373.1 M376.5 377.2V374.5 M377.5 377.2V373.5 M378.5 377.2V374.1 M379.5 377.2V374.9 M380.5 377.2V373.5 M381.5 377.2V369.5 M382.5 377.2V374.8 M383.5 377.2V374.1 M384.5 377.2V373.5 M385.5 377.2V373.8 M386.5 377.2V374.3 M387.5 377.2V373.8 M388.5 377.2V374.6 M389.5 377.2V374.2 M390.5 377.2V371.9 M391.5 377.2V374.6 M392.5 377.2V374.5 M393.5 377.2V374.5 M394.5 377.2V374.1 M395.5 377.2V370.2 M396.5 377.2V368.2 M397.5 377.2V373.7 M398.5 377.2V373.7 M399.5 377.2V371.5 M400.5 377.2V373.3 M401.5 377.2V374.9 M402.5 377.2V374.2 M403.5 377.2V374.8 M404.5 377.2V373.1 M405.5 377.2V374.8 M406.5 377.2V373.1 M407.5 377.2V373.9 M408.5 377.2V373.1 M409.5 377.2V374.4 M410.5 377.2V373.5 M411.5 377.2V374.0 M412.5 377.2V374.5 M413.5 377.2V373.8 M414.5 377.2V373.1 M415.5 377.2V374.0 M416.5 377.2V374.9 M417.5 377.2V374.6 M418.5 377.2V373.0 M419.5 377.2V373.1 M420.5 377.2V373.0 M421.5 377.2V374.3 M422.5 377.2V373.2 M423.5 377.2V372.9 M424.5 377.2V373.7 M425.5 377.2V373.6 M426.5 377.2V373.3 M427.5 377.2V373.4 M428.5 377.2V373.0 M429.5 377.2V373.1 M430.5 377.2V373.6 M431.5 377.2V374.6 M432.5 377.2V374.4 M433.5 377.2V374.8 M434.5 377.2V373.1 M435.5 377.2V374.4 M436.5 377.2V373.7 M437.5 377.2V374.1 M438.5 377.2V374.1 M439.5 377.2V374.7 M440.5 377.2V373.0 M441.5 377.2V373.3 M442.5 377.2V373.7 M443.5 377.2V373.3 M444.5 377.2V374.4 M445.5 377.2V374.3 M446.5 377.2V373.8 M447.5 377.2V375.0 M448.5 377.2V373.0 M449.5 377.2V374.4 M450.5 377.2V373.4 M451.5 377.2V374.2 M452.5 377.2V373.3 M453.5 377.2V373.0 M454.5 377.2V374.5 M455.5 377.2V373.0 M456.5 377.2V370.6 M457.5 377.2V373.2 M458.5 377.2V373.9 M459.5 377.2V373.7 M460.5 377.2V373.3 M461.5 377.2V374.1 M462.5 377.2V374.9 M463.5 377.2V372.7 M464.5 377.2V374.5 M465.5 377.2V374.0 M466.5 377.2V373.1 M467.5 377.2V374.6 M468.5 377.2V374.2 M469.5 377.2V373.2 M470.5 377.2V373.6 M471.5 377.2V374.8 M472.5 377.2V374.3 M473.5 377.2V374.4 M474.5 377.2V373.7 M475.5 377.2V374.3 M476.5 377.2V374.0 M477.5 377.2V373.7 M478.5 377.2V373.4 M479.5 377.2V373.2 M480.5 377.2V374.9 M481.5 377.2V374.8 M482.5 377.2V373.7 M483.5 377.2V372.2 M484.5 377.2V373.6 M485.5 377.2V373.2 M486.5 377.2V373.9 M487.5 377.2V374.6 M488.5 377.2V373.9 M489.5 377.2V373.2 M490.5 377.2V374.7 M491.5 377.2V373.8 M492.5 377.2V374.0 M493.5 377.2V374.9 M494.5 377.2V373.1 M495.5 377.2V374.1 M496.5 377.2V373.4 M497.5 377.2V373.6 M498.5 377.2V374.7 M499.5 377.2V372.0 M500.5 377.2V373.3 M501.5 377.2V374.9 M502.5 377.2V371.8 M503.5 377.2V374.2 M504.5 377.2V373.6 M505.5 377.2V374.6 M506.5 377.2V373.8 M507.5 377.2V375.0 M508.5 377.2V374.1 M509.5 377.2V374.5 M510.5 377.2V369.1 M511.5 377.2V373.7 M512.5 377.2V374.2 M513.5 377.2V369.5 M514.5 377.2V374.8 M515.5 377.2V371.0 M516.5 377.2V374.2 M517.5 377.2V374.3 M518.5 377.2V359.5 M519.5 377.2V369.0 M520.5 377.2V373.2 M521.5 377.2V374.2 M522.5 377.2V374.3 M523.5 377.2V371.6 M524.5 377.2V374.5 M525.5 377.2V374.6 M526.5 377.2V373.4 M527.5 377.2V374.1 M528.5 377.2V374.5 M529.5 377.2V374.6 M530.5 377.2V373.8 M531.5 377.2V374.4 M532.5 377.2V374.6 M533.5 377.2V373.7 M534.5 377.2V373.0 M535.5 377.2V374.1 M536.5 377.2V373.9 M537.5 377.2V374.0 M538.5 377.2V373.5 M539.5 377.2V374.8 M540.5 377.2V373.5 M541.5 377.2V375.0 M542.5 377.2V372.3 M543.5 377.2V373.6 M544.5 377.2V374.5 M545.5 377.2V368.6 M546.5 377.2V373.4 M547.5 377.2V374.6 M548.5 377.2V374.8 M549.5 377.2V373.4 M550.5 377.2V374.3 M551.5 377.2V374.1 M552.5 377.2V373.8 M553.5 377.2V373.1 M554.5 377.2V374.3 M555.5 377.2V373.6 M556.5 377.2V375.0 M557.5 377.2V374.1 M558.5 377.2V374.2 M559.5 377.2V374.8 M560.5 377.2V370.0 M561.5 377.2V374.6 M562.5 377.2V374.2 M563.5 377.2V374.2 M564.5 377.2V374.7 M565.5 377.2V373.9 M566.5 377.2V373.1 M567.5 377.2V374.6 M568.5 377.2V374.0 M569.5 377.2V373.7 M570.5 377.2V373.1 M571.5 377.2V373.5 M572.5 377.2V373.2 M573.5 377.2V373.8 M574.5 377.2V373.1 M575.5 377.2V374.9 M576.5 377.2V373.5 M577.5 377.2V373.2 M578.5 377.2V373.5 M579.5 377.2V373.8 M580.5 377.2V374.0 M581.5 377.2V373.1 M582.5 377.2V374.3 M583.5 377.2V373.6 M584.5 377.2V373.8 M585.5 377.2V373.7 M586.5 377.2V373.7 M587.5 377.2V373.5 M588.5 377.2V374.6 M589.5 377.2V373.4 M590.5 377.2V374.7 M591.5 377.2V373.5 M592.5 377.2V374.5 M593.5 377.2V374.7 M594.5 377.2V374.8 M595.5 377.2V374.7 M596.5 377.2V374.0 M597.5 377.2V370.1 M598.5 377.2V374.7 M599.5 377.2V373.6 M600.5 377.2V373.6 M601.5 377.2V374.5 M602.5 377.2V374.8 M603.5 377.2V373.1 M604.5 377.2V374.7 M605.5 377.2V373.3 M606.5 377.2V374.6 M607.5 377.2V375.0 M608.5 377.2V374.9 M609.5 377.2V374.4 M610.5 377.2V374.4 M611.5 377.2V374.7 M612.5 377.2V373.9 M613.5 377.2V371.4 M614.5 377.2V373.1 M615.5 377.2V373.5 M616.5 377.2V373.5 M617.5 377.2V373.7 M618.5 377.2V374.0 M619.5 377.2V374.4 M620.5 377.2V374.8 M621.5 377.2V373.8 M622.5 377.2V373.6 M623.5 377.2V374.9 M624.5 377.2V375.0 M625.5 377.2V374.7 M626.5 377.2V373.1 M627.5 377.2V373.2 M628.5 377.2V374.8 M629.5 377.2V374.4 M630.5 377.2V374.3 M631.5 377.2V374.3 M632.5 377.2V374.7 M633.5 377.2V373.4 M634.5 377.2V374.9 M635.5 377.2V373.4 M636.5 377.2V373.0 M637.5 377.2V374.9 M638.5 377.2V374.2 M639.5 377.2V373.0 M640.5 377.2V373.8 M641.5 377.2V374.6 M642.5 377.2V373.8 M643.5 377.2V373.1 M644.5 377.2V374.1 M645.5 377.2V371.7 M646.5 377.2V373.4 M647.5 377.2V374.7 M648.5 377.2V374.9 M649.5 377.2V371.7 M650.5 377.2V373.1 M651.5 377.2V373.6 M652.5 377.2V375.0 M653.5 377.2V373.7 M654.5 377.2V374.1 M655.5 377.2V374.0 M656.5 377.2V374.0 M657.5 377.2V374.7 M658.5 377.2V373.8 M659.5 377.2V373.4 M660.5 377.2V374.4 M661.5 377.2V373.9 M662.5 377.2V374.3 M663.5 377.2V374.7 M664.5 377.2V374.0 M665.5 377.2V373.3 M666.5 377.2V373.6 M667.5 377.2V374.7 M668.5 377.2V373.9 M669.5 377.2V374.3 M670.5 377.2V374.1 M671.5 377.2V374.6 M672.5 377.2V374.6 M673.5 377.2V374.6 M674.5 377.2V373.7 M675.5 377.2V373.7 M676.5 377.2V374.6 M677.5 377.2V373.9 M678.5 377.2V373.6 M679.5 377.2V373.9 M680.5 377.2V373.7 M681.5 377.2V374.8 M682.5 377.2V374.0 M683.5 377.2V373.1 M684.5 377.2V373.1 M685.5 377.2V374.1 M686.5 377.2V373.9 M687.5 377.2V374.6 M688.5 377.2V374.8 M689.5 377.2V373.8 M690.5 377.2V372.8 M691.5 377.2V373.1 M692.5 377.2V374.8 M693.5 377.2V373.2 M694.5 377.2V373.1 M695.5 377.2V374.8 M696.5 377.2V374.3 M697.5 377.2V373.4 M698.5 377.2V371.4 M699.5 377.2V374.5 M700.5 377.2V374.0 M701.5 377.2V374.0 M702.5 377.2V374.3 M703.5 377.2V374.4 M704.5 377.2V375.0 M705.5 377.2V374.5 M706.5 377.2V369.3 M707.5 377.2V374.1 M708.5 377.2V374.1 M709.5 377.2V374.5 M710.5 377.2V373.2 M711.5 377.2V373.7 M712.5 377.2V373.9 M713.5 377.2V373.0 M714.5 377.2V374.5 M715.5 377.2V375.0 M716.5 377.2V374.1 M717.5 377.2V375.0 M718.5 377.2V374.9 M719.5 377.2V373.7 M720.5 377.2V371.0 M721.5 377.2V373.6 M722.5 377.2V374.6 M723.5 377.2V374.0 M724.5 377.2V374.0 M725.5 377.2V374.8 M726.5 377.2V374.6 M727.5 377.2V373.6 M728.5 377.2V374.1 M729.5 377.2V374.4 M730.5 377.2V374.1 M731.5 377.2V374.5 M732.5 377.2V373.8 M733.5 377.2V373.6 M734.5 377.2V370.7 M735.5 377.2V374.3 M736.5 377.2V373.9 M737.5 377.2V373.6 M738.5 377.2V373.2 M739.5 377.2V374.6 M740.5 377.2V373.9 M741.5 377.2V373.4 M742.5 377.2V374.5 M743.5 377.2V374.7 M744.5 377.2V373.1 M745.5 377.2V374.3 M746.5 377.2V374.5 M747.5 377.2V373.6 M748.5 377.2V373.6 M749.5 377.2V373.3 M750.5 377.2V374.0 M751.5 377.2V373.4 M752.5 377.2V374.7 M753.5 377.2V373.3 M754.5 377.2V374.2 M755.5 377.2V373.5 M756.5 377.2V373.9 M757.5 377.2V373.6 M758.5 377.2V373.9 M759.5 377.2V373.1 M760.5 377.2V374.6 M761.5 377.2V373.9 M762.5 377.2V374.3 M763.5 377.2V373.1 M764.5 377.2V373.6 M765.5 377.2V373.4 M766.5 377.2V374.7 M767.5 377.2V373.9 M768.5 377.2V373.8 M769.5 377.2V373.4 M770.5 377.2V373.3 M771.5 377.2V374.0 M772.5 377.2V373.3 M773.5 377.2V374.9 M774.5 377.2V373.4 M775.5 377.2V371.4 M776.5 377.2V371.5 M777.5 377.2V375.0 M778.5 377.2V370.2 M779.5 377.2V373.8 M780.5 377.2V374.7 M781.5 377.2V373.4 M782.5 377.2V373.8 M783.5 377.2V373.1 M784.5 377.2V373.2 M785.5 377.2V375.0 M786.5 377.2V373.7 M787.5 377.2V374.2 M788.5 377.2V373.4 M789.5 377.2V375.0 M790.5 377.2V374.0 M791.5 377.2V374.3 M792.5 377.2V374.3 M793.5 377.2V373.3 M794.5 377.2V373.1 M795.5 377.2V374.6 M796.5 377.2V373.4 M797.5 377.2V375.0 M798.5 377.2V373.7 M799.5 377.2V373.6 M800.5 377.2V374.3 M801.5 377.2V374.5 M802.5 377.2V373.9 M803.5 377.2V373.4 M804.5 377.2V374.7 M805.5 377.2V374.2 M806.5 377.2V373.2 M807.5 377.2V374.8 M808.5 377.2V374.6 M809.5 377.2V374.5 M810.5 377.2V373.6 M811.5 377.2V373.3 M812.5 377.2V373.5 M813.5 377.2V374.3 M814.5 377.2V374.1 M815.5 377.2V374.6 M816.5 377.2V373.2 M817.5 377.2V374.6 M818.5 377.2V375.0 M819.5 377.2V375.0 M820.5 377.2V373.2 M821.5 377.2V374.3 M822.5 377.2V374.3 M823.5 377.2V374.3 M824.5 377.2V371.8 M825.5 377.2V373.6 M826.5 377.2V374.3 M827.5 377.2V374.2 M828.5 377.2V373.3 M829.5 377.2V373.1 M830.5 377.2V374.1 M831.5 377.2V373.5 M832.5 377.2V374.7 M833.5 377.2V372.3 M834.5 377.2V374.5 M835.5 377.2V373.8 M836.5 377.2V371.9 M837.5 377.2V373.3 M838.5 377.2V374.9 M839.5 377.2V374.2 M840.5 377.2V374.7 M841.5 377.2V373.7 M842.5 377.2V374.7 M843.5 377.2V374.8 M844.5 377.2V374.0 M845.5 377.2V373.5 M846.5 377.2V374.2 M847.5 377.2V373.7 M848.5 377.2V374.2 M849.5 377.2V373.2 M850.5 377.2V374.6 M851.5 377.2V375.0 M852.5 377.2V373.8 M853.5 377.2V373.6 M854.5 377.2V374.9 M855.5 377.2V374.9 M856.5 377.2V373.1 M857.5 377.2V372.2 M858.5 377.2V373.9 M859.5 377.2V373.9 M860.5 377.2V374.0 M861.5 377.2V373.1 M862.5 377.2V373.1 M863.5 377.2V373.1 M864.5 377.2V374.9 M865.5 377.2V375.0 M866.5 377.2V373.1 M867.5 377.2V374.9 M868.5 377.2V373.1 M869.5 377.2V372.3 M870.5 377.2V374.5 M871.5 377.2V374.2 M872.5 377.2V373.5 M873.5 377.2V374.2 M874.5 377.2V374.3 M875.5 377.2V373.5 M876.5 377.2V373.4 M877.5 377.2V373.8 M878.5 377.2V374.0 M879.5 377.2V373.6 M880.5 377.2V373.1 M881.5 377.2V373.7 M882.5 377.2V370.4 M883.5 377.2V374.2 M884.5 377.2V373.7 M885.5 377.2V373.7 M886.5 377.2V373.9 M887.5 377.2V373.7 M888.5 377.2V374.3 M889.5 377.2V374.3 M890.5 377.2V373.5 M891.5 377.2V370.9 M892.5 377.2V374.5 M893.5 377.2V373.3 M894.5 377.2V373.4 M895.5 377.2V373.1 M896.5 377.2V374.4 M897.5 377.2V373.2 M898.5 377.2V373.7 M899.5 377.2V368.4 M900.5 377.2V374.1 M901.5 377.2V374.5 M902.5 377.2V373.5 M903.5 377.2V373.5 M904.5 377.2V372.8 M905.5 377.2V371.0 M906.5 377.2V374.1 M907.5 377.2V373.0 M908.5 377.2V373.9 M909.5 377.2V374.0 M910.5 377.2V373.3 M911.5 377.2V374.1 M912.5 377.2V374.2 M913.5 377.2V373.8 M914.5 377.2V373.3 M915.5 377.2V374.3 M916.5 377.2V374.7 M917.5 377.2V373.6 M918.5 377.2V373.3 M919.5 377.2V372.8 M920.5 377.2V371.1 M921.5 377.2V373.3 M922.5 377.2V373.4 M923.5 377.2V374.0 M924.5 377.2V373.6 M925.5 377.2V373.5 M926.5 377.2V374.3 M927.5 377.2V373.9 M928.5 377.2V372.4 M929.5 377.2V370.1 M930.5 377.2V372.2 M931.5 377.2V373.1 M932.5 377.2V374.0 M933.5 377.2V374.2 M934.5 377.2V372.1 M935.5 377.2V370.8 M936.5 377.2V372.3 M937.5 377.2V373.4 M938.5 377.2V373.4 M939.5 377.2V372.8 M940.5 377.2V374.2 M941.5 377.2V372.1 M942.5 377.2V373.3 M943.5 377.2V371.7 M944.5 377.2V374.1 M945.5 377.2V374.4 M946.5 377.2V373.9 M947.5 377.2V371.9 M948.5 377.2V373.5 M949.5 377.2V373.1 M950.5 377.2V372.1 M951.5 377.2V374.3 M952.5 377.2V372.0 M953.5 377.2V373.1 M954.5 377.2V373.8 M955.5 377.2V371.9 M956.5 377.2V372.2 M957.5 377.2V373.9 M958.5 377.2V374.1 M959.5 377.2V373.4 M960.5 377.2V371.5 M961.5 377.2V372.7 M962.5 377.2V374.0 M963.5 377.2V372.3 M964.5 377.2V373.1 M965.5 377.2V372.2 M966.5 377.2V373.5 M967.5 377.2V372.9 M968.5 377.2V373.3 M969.5 377.2V373.5 M970.5 377.2V371.4 M971.5 377.2V372.0 M972.5 377.2V371.4 M973.5 377.2V372.7 M974.5 377.2V372.1 M975.5 377.2V370.3 M976.5 377.2V368.4 M977.5 377.2V372.7 M978.5 377.2V373.4 M979.5 377.2V372.2 M980.5 377.2V371.8 M981.5 377.2V373.4 M982.5 377.2V371.4 M983.5 377.2V373.5 M984.5 377.2V371.5 M985.5 377.2V373.9 M986.5 377.2V355.0" stroke="#c8c800" stroke-width="1"/>
<path d="M39.6 172.1 L40.8 169.5 L41.9 165.0 L42.9 161.9 L43.9 157.2 L45.2 153.6 L46.6 151.7 L48.2 158.0 L49.7 152.5 L50.8 153.2 L51.8 154.2 L52.9 156.4 L53.9 157.4 L55.0 159.6 L56.0 160.3 L57.1 162.7 L58.3 165.8 L59.4 166.9 L60.4 166.4 L61.5 168.2 L62.6 172.5 L63.8 178.3 L65.2 175.9 L66.5 172.9 L67.9 176.1 L69.3 179.9 L70.6 181.0 L71.9 182.4 L73.2 184.6 L74.4 190.8 L75.6 195.6 L77.1 189.3 L78.4 190.5 L79.7 191.9 L81.0 194.0 L82.2 196.5 L83.4 200.3 L84.7 199.7 L86.0 201.1 L87.3 200.3 L88.9 205.7 L89.9 207.6 L91.0 208.6 L92.0 208.4 L93.0 210.1 L94.1 212.3 L95.1 212.8 L96.4 211.8 L97.7 209.9 L99.0 207.3 L100.1 209.8 L101.1 213.4 L102.2 215.9 L103.3 218.3 L104.4 220.6 L105.4 221.2 L106.5 224.6 L107.6 226.1 L109.2 223.7 L110.4 224.6 L111.6 224.4 L112.7 223.3 L113.9 224.5 L115.1 221.8 L116.2 217.5 L117.4 218.3 L118.6 219.8 L119.6 217.7 L120.7 214.6 L121.7 211.2 L123.0 215.0 L124.3 217.2 L125.6 219.8 L126.8 220.3 L128.0 219.2 L129.1 219.0 L130.3 219.8 L131.4 216.1 L132.4 214.6 L133.5 211.2 L134.6 212.5 L135.7 213.7 L136.7 214.9 L137.8 215.9 L138.9 215.9 L140.0 215.7 L141.0 214.6 L142.1 212.8 L143.4 213.2 L144.7 211.4 L146.0 211.2 L147.2 207.8 L148.3 205.0 L149.5 201.9 L150.7 199.5 L151.7 200.4 L152.8 202.8 L153.8 203.4 L154.9 203.7 L156.0 201.5 L157.1 202.1 L158.2 201.3 L159.3 200.3 L160.5 204.3 L161.7 206.7 L162.8 211.8 L164.0 215.1 L165.5 211.2 L166.7 211.9 L167.9 211.2 L169.5 201.8 L170.5 203.9 L171.6 205.9 L172.6 208.9 L173.6 210.9 L174.7 210.6 L175.7 212.8 L176.8 214.4 L177.9 216.2 L179.0 217.1 L180.2 216.8 L181.3 219.6 L182.4 220.5 L183.5 221.4 L184.6 219.6 L185.7 220.2 L186.8 217.9 L187.9 216.7 L189.0 216.7 L190.3 218.1 L191.6 217.9 L192.9 219.8 L193.9 220.9 L195.0 220.0 L196.0 217.4 L197.0 217.1 L198.0 214.7 L199.4 217.7 L200.8 221.7 L202.0 221.5 L203.2 223.4 L204.3 222.3 L205.5 224.5 L206.7 224.2 L207.7 223.3 L208.8 223.9 L209.8 221.9 L210.8 222.5 L212.1 221.7 L213.3 219.7 L214.4 218.2 L215.4 218.9 L216.5 218.5 L217.6 217.2 L218.7 215.7 L219.7 214.9 L220.8 214.7 L222.0 215.8 L223.2 214.7 L224.3 216.5 L225.5 215.1 L226.7 216.3 L227.8 217.2 L228.9 219.3 L230.0 221.7 L231.0 222.3 L232.0 224.4 L233.0 225.8 L234.0 225.5 L235.0 227.5 L236.2 228.2 L237.3 230.4 L238.5 233.3 L239.6 233.4 L240.8 235.8 L242.1 237.2 L243.3 237.0 L244.2 230.0 L245.2 230.6 L246.2 230.1 L247.3 229.9 L248.3 230.8 L249.3 230.8 L250.3 231.1 L251.3 232.3 L252.3 232.7 L253.3 233.8 L254.3 231.7 L255.3 231.8 L256.3 230.9 L257.3 227.8 L258.3 227.5 L259.4 227.9 L260.4 227.3 L261.4 225.2 L262.5 225.3 L263.8 220.1 L265.0 216.7 L266.2 217.2 L267.5 219.2 L268.6 221.8 L269.7 226.0 L270.8 228.3 L272.1 222.6 L273.3 218.3 L274.3 218.6 L275.3 218.1 L276.3 215.9 L277.3 215.8 L278.3 215.8 L279.6 216.6 L280.8 216.7 L281.9 218.8 L283.1 221.4 L284.2 225.0 L285.4 225.4 L286.5 226.2 L287.7 228.7 L288.8 229.7 L290.0 230.0 L291.7 234.2 L292.7 233.1 L293.7 234.5 L294.7 232.3 L295.7 232.2 L296.7 232.5 L297.8 234.8 L298.9 235.1 L300.0 237.5 L301.0 239.0 L302.0 240.7 L303.0 240.0 L304.0 242.5 L305.0 243.3 L306.1 242.7 L307.2 243.3 L308.4 244.0 L309.5 245.4 L310.6 245.0 L311.7 245.8 L312.8 247.1 L313.9 246.9 L315.0 246.1 L316.1 246.1 L317.2 246.7 L318.3 247.5 L319.4 248.4 L320.6 247.5 L321.7 248.3 L322.7 246.5 L323.7 242.9 L324.7 239.8 L325.7 237.9 L326.7 235.8 L327.9 237.8 L329.2 239.2 L330.2 238.3 L331.2 237.5 L332.3 238.5 L333.3 237.5 L334.6 239.1 L335.8 239.2 L336.9 237.5 L337.9 236.1 L338.9 235.0 L340.0 234.2 L341.1 235.4 L342.2 238.4 L343.3 240.0 L344.6 238.4 L345.8 237.5 L346.8 237.9 L347.8 240.5 L348.8 241.4 L349.8 242.2 L350.8 242.5 L351.9 243.3 L352.9 244.4 L353.9 246.4 L355.0 248.3 L356.0 248.1 L357.0 249.6 L358.0 248.6 L359.0 248.9 L360.0 249.7 L361.1 247.5 L362.1 247.0 L363.1 245.5 L364.2 245.0 L365.2 244.9 L366.2 245.9 L367.3 248.2 L368.3 248.3 L369.5 250.0 L370.7 250.6 L371.8 250.0 L373.0 250.7 L374.2 252.0 L375.2 254.6 L376.2 254.8 L377.3 257.3 L378.3 258.3 L379.4 257.4 L380.5 258.1 L381.6 257.4 L382.8 256.4 L383.9 255.1 L385.0 255.0 L386.1 252.8 L387.2 251.0 L388.3 247.5 L390.0 245.8 L391.1 247.3 L392.1 248.4 L393.1 248.6 L394.2 250.0 L395.2 248.7 L396.2 247.3 L397.3 244.5 L398.3 243.3 L399.4 242.5 L400.4 242.1 L401.4 241.5 L402.5 241.7 L403.6 243.2 L404.6 243.4 L405.6 244.0 L406.7 245.8 L407.8 246.1 L408.9 245.1 L410.0 244.2 L411.0 243.5 L412.0 244.3 L413.0 242.2 L414.0 242.0 L415.0 242.5 L416.7 250.8 L417.7 251.4 L418.7 252.4 L419.7 254.8 L420.7 255.7 L421.7 255.8 L422.8 254.5 L423.9 254.1 L425.0 253.5 L426.1 252.8 L427.2 252.3 L428.3 252.5 L429.3 252.2 L430.3 254.0 L431.3 253.1 L432.3 253.7 L433.3 255.0 L434.3 255.1 L435.3 256.8 L436.3 257.1 L437.3 258.2 L438.3 257.5 L439.3 257.9 L440.3 259.8 L441.3 259.3 L442.3 259.6 L443.3 260.8 L444.4 258.6 L445.4 258.6 L446.4 257.3 L447.5 255.3 L448.6 257.7 L449.6 258.0 L450.6 259.1 L451.7 261.7 L452.7 261.8 L453.8 262.0 L454.8 264.4 L455.9 264.4 L456.9 264.2 L457.9 264.8 L459.0 266.7 L460.0 266.3 L461.2 265.3 L462.5 265.8 L463.8 262.6 L465.0 257.5 L466.0 257.1 L467.0 256.4 L468.0 254.7 L469.0 254.9 L470.0 253.3 L471.1 255.2 L472.2 255.5 L473.4 258.0 L474.5 259.2 L475.6 261.2 L476.7 261.7 L477.7 259.0 L478.8 257.4 L479.8 256.9 L480.8 254.7 L482.0 254.3 L483.2 254.6 L484.3 256.2 L485.5 255.1 L486.7 255.8 L487.8 252.6 L488.9 251.9 L490.0 248.8 L491.2 249.3 L492.5 250.8 L493.6 254.1 L494.6 256.7 L495.6 259.8 L496.7 261.7 L497.8 261.8 L498.9 261.0 L500.0 258.4 L501.1 257.4 L502.2 258.1 L503.3 256.7 L504.3 256.4 L505.3 258.3 L506.3 257.8 L507.3 259.2 L508.3 259.2 L509.4 260.0 L510.5 260.5 L511.6 259.8 L512.7 261.1 L513.9 260.7 L515.0 262.1 L516.1 262.7 L517.2 262.7 L518.3 262.5 L519.5 256.2 L520.8 250.8 L522.0 247.8 L523.3 245.8 L524.4 246.7 L525.6 249.1 L526.7 250.0 L527.7 248.9 L528.8 250.2 L529.8 248.8 L530.8 249.2 L531.9 252.8 L533.1 255.2 L534.2 257.5 L535.2 247.9 L536.3 237.5 L537.5 240.7 L538.8 244.1 L540.0 248.3 L541.1 246.4 L542.2 244.2 L543.3 240.8 L544.3 239.3 L545.4 239.3 L546.5 238.4 L547.5 236.3 L548.8 239.7 L550.0 242.5 L551.2 240.4 L552.5 236.3 L553.5 238.4 L554.6 237.7 L555.7 239.3 L556.7 240.8 L557.8 238.2 L558.9 237.8 L560.0 235.8 L561.0 236.3 L562.1 237.0 L563.2 237.6 L564.2 239.2 L565.3 239.7 L566.4 238.9 L567.5 238.5 L568.6 236.9 L569.7 237.5 L570.8 236.3 L572.0 236.8 L573.2 237.6 L574.3 239.2 L575.5 241.6 L576.7 241.7 L577.7 242.0 L578.7 239.7 L579.7 239.0 L580.7 238.0 L581.7 238.3 L582.7 238.3 L583.8 237.0 L584.8 237.7 L585.8 237.0 L587.0 239.2 L588.2 243.3 L589.3 245.0 L590.5 249.3 L591.7 251.7 L592.7 252.8 L593.8 253.8 L594.8 253.1 L595.8 254.2 L596.8 255.3 L597.9 257.0 L599.0 258.7 L600.0 260.8 L601.2 259.9 L602.5 258.3 L603.6 260.0 L604.7 259.7 L605.8 261.3 L606.8 259.0 L607.9 257.6 L609.0 256.7 L610.0 255.8 L611.0 256.3 L612.1 257.5 L613.2 259.9 L614.2 260.0 L615.2 260.4 L616.2 258.2 L617.3 259.2 L618.3 258.3 L619.4 259.9 L620.5 261.7 L621.6 262.7 L622.8 263.0 L623.9 264.9 L625.0 265.8 L626.2 266.8 L627.3 265.1 L628.5 265.2 L629.6 266.7 L630.8 265.8 L632.0 265.7 L633.2 265.4 L634.3 265.0 L635.5 264.9 L636.7 263.7 L637.7 264.7 L638.7 265.5 L639.7 266.0 L640.7 265.7 L641.7 267.0 L642.8 265.5 L643.9 264.0 L645.0 264.5 L646.1 263.8 L647.2 261.3 L648.3 260.8 L649.4 262.1 L650.6 261.9 L651.7 262.0 L652.8 260.8 L653.9 259.9 L655.0 260.3 L656.1 259.3 L657.2 258.5 L658.3 256.7 L659.4 254.4 L660.6 253.6 L661.7 252.5 L662.7 253.9 L663.7 252.8 L664.7 254.9 L665.7 255.1 L666.7 255.0 L667.7 253.7 L668.7 254.6 L669.7 252.6 L670.7 252.0 L671.7 252.0 L672.7 251.5 L673.8 251.1 L674.8 248.7 L675.8 248.3 L676.8 247.6 L677.8 248.4 L678.9 247.9 L679.9 246.6 L680.9 246.1 L681.9 245.8 L683.0 246.9 L684.0 246.6 L685.0 245.8 L686.1 244.3 L687.2 241.5 L688.4 239.6 L689.5 237.5 L690.6 236.6 L691.7 234.2 L692.7 232.6 L693.8 231.6 L694.8 230.7 L695.9 230.2 L696.9 230.6 L697.9 227.9 L699.0 228.2 L700.0 227.0 L701.1 227.6 L702.2 226.9 L703.3 227.5 L705.0 223.3 L706.7 225.8 L707.8 223.1 L708.9 222.9 L710.0 220.5 L711.1 223.3 L712.2 228.2 L713.3 230.8 L714.3 229.3 L715.3 228.9 L716.3 227.9 L717.3 225.7 L718.3 225.0 L720.0 229.2 L721.1 229.9 L722.2 229.2 L723.4 231.0 L724.5 231.3 L725.6 231.6 L726.7 231.7 L727.7 230.5 L728.7 231.4 L729.7 229.8 L730.7 229.6 L731.7 230.0 L732.7 229.7 L733.7 231.8 L734.7 232.5 L735.7 232.6 L736.7 232.5 L737.8 231.4 L738.9 232.0 L740.0 230.8 L741.1 227.1 L742.2 226.0 L743.3 222.5 L744.5 220.2 L745.8 216.3 L747.0 219.3 L748.3 224.2 L749.4 225.4 L750.6 225.1 L751.7 225.0 L752.8 226.0 L753.9 228.9 L755.0 229.5 L756.1 230.8 L757.2 233.4 L758.3 234.7 L760.0 228.7 L761.1 230.2 L762.2 229.7 L763.3 230.8 L765.0 230.0 L766.1 233.5 L767.2 235.2 L768.3 239.2 L769.3 238.8 L770.3 239.0 L771.3 238.7 L772.3 240.4 L773.3 240.0 L775.0 237.5 L776.0 237.9 L777.1 236.8 L778.2 236.8 L779.2 237.5 L780.9 237.3 L782.2 234.2 L783.5 232.9 L784.5 232.1 L785.5 232.0 L786.5 231.9 L787.6 231.9 L788.6 231.8 L789.6 232.0 L791.0 228.2 L792.3 225.9 L793.3 225.6 L794.4 225.2 L795.4 224.6 L796.5 223.8 L797.5 222.4 L798.7 221.4 L799.8 219.9 L801.0 217.7 L802.1 219.1 L803.2 218.9 L804.3 221.2 L805.4 221.5 L806.5 220.9 L807.6 219.6 L808.7 217.9 L809.8 215.9 L810.9 216.0 L812.0 217.5 L813.0 218.1 L814.1 218.0 L815.2 218.6 L816.2 219.4 L817.3 221.5 L818.3 221.2 L819.4 222.4 L820.7 220.8 L822.0 217.7 L823.1 215.4 L824.1 212.8 L825.2 211.9 L826.3 212.5 L827.4 214.5 L828.6 214.2 L829.7 215.7 L830.8 217.1 L831.8 217.8 L832.9 217.5 L833.9 218.0 L835.0 217.5 L836.0 217.1 L837.1 218.9 L838.2 220.5 L839.3 220.6 L840.4 222.4 L841.4 222.0 L842.4 222.8 L843.5 223.2 L844.5 222.8 L845.5 222.8 L846.5 222.4 L847.5 222.0 L848.5 224.1 L849.5 224.2 L850.5 223.4 L851.5 225.1 L852.5 225.1 L853.5 225.0 L854.6 226.8 L855.6 227.8 L856.7 227.8 L857.7 228.7 L858.8 230.6 L859.8 230.4 L860.8 231.8 L861.8 232.4 L862.8 231.5 L863.8 233.0 L864.8 233.2 L865.8 232.9 L866.8 233.8 L867.9 232.3 L868.9 232.6 L870.0 232.2 L871.0 232.9 L872.0 233.7 L873.0 234.3 L874.0 234.8 L875.1 234.0 L876.1 235.2 L877.1 235.2 L878.3 232.9 L879.4 231.7 L880.6 231.1 L882.0 234.6 L883.3 237.3 L884.4 237.0 L885.5 239.1 L886.6 240.1 L887.6 239.0 L888.7 241.1 L889.8 241.7 L890.9 242.1 L892.0 242.2 L893.0 239.8 L894.0 237.4 L895.0 235.5 L896.0 233.5 L897.0 231.4 L898.0 229.0 L899.0 227.6 L900.1 228.5 L901.1 226.9 L902.2 227.1 L903.2 226.6 L904.3 227.6 L905.5 229.9 L906.6 230.0 L907.8 232.0 L908.9 233.2 L910.0 233.1 L911.1 233.5 L912.3 233.0 L913.4 233.5 L914.5 235.0 L915.6 234.6 L916.7 234.9 L917.8 234.5 L918.9 233.8 L920.0 232.9 L921.0 232.3 L922.0 232.1 L923.0 231.4 L924.1 231.1 L925.1 232.3 L926.1 231.7 L927.2 233.0 L928.3 232.6 L929.4 234.5 L930.5 234.6 L931.5 233.9 L932.6 235.9 L933.6 234.4 L934.7 236.2 L935.8 236.2 L936.8 235.0 L937.9 235.5 L938.9 235.7 L940.0 235.7 L941.0 236.4 L942.0 236.0 L943.0 236.9 L944.0 236.9 L945.0 237.7 L946.0 238.9 L947.0 238.0 L948.0 239.7 L949.0 239.3 L950.0 239.8 L951.0 239.7 L952.0 241.6 L953.0 241.0 L954.0 241.3 L955.0 242.2 L956.0 242.9 L957.1 241.9 L958.1 242.9 L959.2 243.6 L960.2 243.7 L961.3 242.1 L962.4 242.4 L963.4 242.6 L964.5 242.6 L965.5 243.4 L966.6 242.4 L967.7 242.4 L968.8 243.4 L969.9 242.1 L971.0 243.5 L972.1 242.2 L973.2 242.7 L974.3 242.2 L975.3 241.0 L976.3 242.8 L977.3 242.3 L978.3 240.9 L979.3 240.2 L980.3 240.4 L981.3 240.8 L982.3 240.9 L983.4 242.2 L984.4 243.2 L985.5 245.3 L986.5 246.0" fill="none" stroke="#e8e8e8" stroke-width="1" stroke-linejoin="round"/>
</svg>
<div class="b" style="left:0;top:390px;width:1025px;height:1px;background:#b00000;"></div>
<div class="t" style="left:39px;top:34.50px;color:#c8c8c8;font-size:9px;line-height:14px;">深证科技</div>
<div class="t" style="left:80px;top:34.50px;color:#f4f4f4;font-size:9px;line-height:14px;">闪电图</div>
<div class="t" style="left:109.4px;top:34.50px;color:#c8c800;font-size:9px;line-height:14px;">成交额(万元)</div>
<div class="t" style="right:216.00px;top:34.60px;color:#c0c0c0;font-size:9.2px;line-height:14px;text-align:right;">Home放大 End缩小</div>
<div class="t" style="right:1162.80px;top:42.50px;color:#e03030;font-size:9.8px;line-height:14px;text-align:right;letter-spacing:-0.25px;">8918</div>
<div class="t" style="left:988.7px;top:42.50px;color:#e03030;font-size:9.8px;line-height:14px;letter-spacing:-0.35px;">2.08%</div>
<div class="t" style="right:1162.80px;top:57.50px;color:#e03030;font-size:9.8px;line-height:14px;text-align:right;letter-spacing:-0.25px;">8892</div>
<div class="t" style="left:988.7px;top:57.50px;color:#e03030;font-size:9.8px;line-height:14px;letter-spacing:-0.35px;">1.78%</div>
<div class="t" style="right:1162.80px;top:73.20px;color:#e03030;font-size:9.8px;line-height:14px;text-align:right;letter-spacing:-0.25px;">8866</div>
<div class="t" style="left:988.7px;top:73.20px;color:#e03030;font-size:9.8px;line-height:14px;letter-spacing:-0.35px;">1.48%</div>
<div class="t" style="right:1162.80px;top:88.80px;color:#e03030;font-size:9.8px;line-height:14px;text-align:right;letter-spacing:-0.25px;">8840</div>
<div class="t" style="left:988.7px;top:88.80px;color:#e03030;font-size:9.8px;line-height:14px;letter-spacing:-0.35px;">1.19%</div>
<div class="t" style="right:1162.80px;top:103.70px;color:#e03030;font-size:9.8px;line-height:14px;text-align:right;letter-spacing:-0.25px;">8814</div>
<div class="t" style="left:988.7px;top:103.70px;color:#e03030;font-size:9.8px;line-height:14px;letter-spacing:-0.35px;">0.89%</div>
<div class="t" style="right:1162.80px;top:119.70px;color:#e03030;font-size:9.8px;line-height:14px;text-align:right;letter-spacing:-0.25px;">8788</div>
<div class="t" style="left:988.7px;top:119.70px;color:#e03030;font-size:9.8px;line-height:14px;letter-spacing:-0.35px;">0.59%</div>
<div class="t" style="right:1162.80px;top:135.70px;color:#e03030;font-size:9.8px;line-height:14px;text-align:right;letter-spacing:-0.25px;">8762</div>
<div class="t" style="left:988.7px;top:135.70px;color:#e03030;font-size:9.8px;line-height:14px;letter-spacing:-0.35px;">0.30%</div>
<div class="t" style="right:1162.80px;top:151.70px;color:#d8d8d8;font-size:9.8px;line-height:14px;text-align:right;letter-spacing:-0.25px;">8737</div>
<div class="t" style="left:988.7px;top:151.70px;color:#d8d8d8;font-size:9.8px;line-height:14px;letter-spacing:-0.35px;">0.00%</div>
<div class="t" style="right:1162.80px;top:166.70px;color:#00d000;font-size:9.8px;line-height:14px;text-align:right;letter-spacing:-0.25px;">8711</div>
<div class="t" style="left:988.7px;top:166.70px;color:#00d000;font-size:9.8px;line-height:14px;letter-spacing:-0.35px;">0.30%</div>
<div class="t" style="right:1162.80px;top:182.20px;color:#00d000;font-size:9.8px;line-height:14px;text-align:right;letter-spacing:-0.25px;">8685</div>
<div class="t" style="left:988.7px;top:182.20px;color:#00d000;font-size:9.8px;line-height:14px;letter-spacing:-0.35px;">0.59%</div>
<div class="t" style="right:1162.80px;top:197.90px;color:#00d000;font-size:9.8px;line-height:14px;text-align:right;letter-spacing:-0.25px;">8659</div>
<div class="t" style="left:988.7px;top:197.90px;color:#00d000;font-size:9.8px;line-height:14px;letter-spacing:-0.35px;">0.89%</div>
<div class="t" style="right:1162.80px;top:213.70px;color:#00d000;font-size:9.8px;line-height:14px;text-align:right;letter-spacing:-0.25px;">8633</div>
<div class="t" style="left:988.7px;top:213.70px;color:#00d000;font-size:9.8px;line-height:14px;letter-spacing:-0.35px;">1.19%</div>
<div class="t" style="right:1162.80px;top:229.70px;color:#00d000;font-size:9.8px;line-height:14px;text-align:right;letter-spacing:-0.25px;">8607</div>
<div class="t" style="left:988.7px;top:229.70px;color:#00d000;font-size:9.8px;line-height:14px;letter-spacing:-0.35px;">1.48%</div>
<div class="t" style="right:1162.80px;top:245.60px;color:#00d000;font-size:9.8px;line-height:14px;text-align:right;letter-spacing:-0.25px;">8581</div>
<div class="t" style="left:988.7px;top:245.60px;color:#00d000;font-size:9.8px;line-height:14px;letter-spacing:-0.35px;">1.78%</div>
<div class="t" style="right:1162.80px;top:261.50px;color:#c8c800;font-size:9.8px;line-height:14px;text-align:right;letter-spacing:-0.25px;">144866</div>
<div class="t" style="left:988.7px;top:261.50px;color:#c8c800;font-size:9.8px;line-height:14px;letter-spacing:-0.35px;">144866</div>
<div class="t" style="right:1162.80px;top:274.65px;color:#c8c800;font-size:9.8px;line-height:14px;text-align:right;letter-spacing:-0.25px;">126757</div>
<div class="t" style="left:988.7px;top:274.65px;color:#c8c800;font-size:9.8px;line-height:14px;letter-spacing:-0.35px;">126757</div>
<div class="t" style="right:1162.80px;top:288.20px;color:#c8c800;font-size:9.8px;line-height:14px;text-align:right;letter-spacing:-0.25px;">108649</div>
<div class="t" style="left:988.7px;top:288.20px;color:#c8c800;font-size:9.8px;line-height:14px;letter-spacing:-0.35px;">108649</div>
<div class="t" style="right:1162.80px;top:301.65px;color:#c8c800;font-size:9.8px;line-height:14px;text-align:right;letter-spacing:-0.25px;">90541</div>
<div class="t" style="left:988.7px;top:301.65px;color:#c8c800;font-size:9.8px;line-height:14px;letter-spacing:-0.35px;">90541</div>
<div class="t" style="right:1162.80px;top:315.70px;color:#c8c800;font-size:9.8px;line-height:14px;text-align:right;letter-spacing:-0.25px;">72433</div>
<div class="t" style="left:988.7px;top:315.70px;color:#c8c800;font-size:9.8px;line-height:14px;letter-spacing:-0.35px;">72433</div>
<div class="t" style="right:1162.80px;top:329.70px;color:#c8c800;font-size:9.8px;line-height:14px;text-align:right;letter-spacing:-0.25px;">54325</div>
<div class="t" style="left:988.7px;top:329.70px;color:#c8c800;font-size:9.8px;line-height:14px;letter-spacing:-0.35px;">54325</div>
<div class="t" style="right:1162.80px;top:343.20px;color:#c8c800;font-size:9.8px;line-height:14px;text-align:right;letter-spacing:-0.25px;">36216</div>
<div class="t" style="left:988.7px;top:343.20px;color:#c8c800;font-size:9.8px;line-height:14px;letter-spacing:-0.35px;">36216</div>
<div class="t" style="right:1162.80px;top:356.70px;color:#c8c800;font-size:9.8px;line-height:14px;text-align:right;letter-spacing:-0.25px;">18108</div>
<div class="t" style="left:988.7px;top:356.70px;color:#c8c800;font-size:9.8px;line-height:14px;letter-spacing:-0.35px;">18108</div>
<div class="t" style="right:1161.00px;top:376.60px;color:#d03030;font-size:9.5px;line-height:14px;text-align:right;">09:30</div>
<div class="t" style="right:921.50px;top:376.60px;color:#d03030;font-size:9.5px;line-height:14px;text-align:right;">10:30</div>
<div class="t" style="right:681.50px;top:376.60px;color:#d03030;font-size:9.5px;line-height:14px;text-align:right;">13:00</div>
<div class="t" style="right:442.00px;top:376.60px;color:#d03030;font-size:9.5px;line-height:14px;text-align:right;">14:00</div>
<div class="t" style="right:215.00px;top:376.60px;color:#d03030;font-size:9.5px;line-height:14px;text-align:right;">15:00</div>
<svg class="b" style="left:5px;top:394.5px" width="11" height="10" viewBox="-5.5 -5 11 10"><g fill="#8c8c8c"><circle r="3.6"/><rect x="-1.2" y="-5" width="2.4" height="2.6" transform="rotate(0)"/><rect x="-1.2" y="-5" width="2.4" height="2.6" transform="rotate(45)"/><rect x="-1.2" y="-5" width="2.4" height="2.6" transform="rotate(90)"/><rect x="-1.2" y="-5" width="2.4" height="2.6" transform="rotate(135)"/><rect x="-1.2" y="-5" width="2.4" height="2.6" transform="rotate(180)"/><rect x="-1.2" y="-5" width="2.4" height="2.6" transform="rotate(225)"/><rect x="-1.2" y="-5" width="2.4" height="2.6" transform="rotate(270)"/><rect x="-1.2" y="-5" width="2.4" height="2.6" transform="rotate(315)"/></g><circle r="1.6" fill="#000"/></svg>
<div class="t" style="left:27px;top:392.25px;color:#c0c0c0;font-size:10px;line-height:14px;">名称(564)</div>
<div class="b" style="left:108.5px;top:397.5px;width:3px;height:3px;border-radius:2px;background:#d8d8d8;"></div>
<div class="t" style="right:1043.50px;top:392.25px;color:#c0c0c0;font-size:10px;line-height:14px;text-align:right;">涨幅<span style="font-size:8px">%</span></div>
<svg class="b" style="left:155px;top:393px" width="6" height="13"><path d="M3 1V11 M0.8 8.5 L3 11.5 L5.2 8.5" stroke="#ff3030" fill="none" stroke-width="1.2"/></svg>
<div class="t" style="right:989.25px;top:392.25px;color:#c0c0c0;font-size:10px;line-height:14px;text-align:right;">现价</div>
<div class="t" style="right:950.50px;top:392.25px;color:#c0c0c0;font-size:10px;line-height:14px;text-align:right;">量比</div>
<div class="t" style="right:908.25px;top:392.25px;color:#c0c0c0;font-size:10px;line-height:14px;text-align:right;">涨速<span style="font-size:8px">%</span></div>
<div class="t" style="right:838.75px;top:392.25px;color:#c0c0c0;font-size:10px;line-height:14px;text-align:right;">总市值</div>
<div class="t" style="right:781.75px;top:392.25px;color:#c0c0c0;font-size:10px;line-height:14px;text-align:right;">3日涨幅<span style="font-size:8px">%</span></div>
<div class="t" style="right:736.75px;top:392.25px;color:#c0c0c0;font-size:10px;line-height:14px;text-align:right;">换手<span style="font-size:8px">%</span></div>
<div class="t" style="right:680.00px;top:392.25px;color:#c0c0c0;font-size:10px;line-height:14px;text-align:right;">市盈(动)</div>
<div class="t" style="right:622.50px;top:392.25px;color:#c0c0c0;font-size:10px;line-height:14px;text-align:right;">主力净额</div>
<div class="t" style="right:559.50px;top:392.25px;color:#c0c0c0;font-size:10px;line-height:14px;text-align:right;">主力净比<span style="font-size:8px">%</span></div>
<div class="t" style="right:496.25px;top:392.25px;color:#c0c0c0;font-size:10px;line-height:14px;text-align:right;">2分钟金额</div>
<div class="t" style="right:439.25px;top:392.25px;color:#c0c0c0;font-size:10px;line-height:14px;text-align:right;">涨跌数</div>
<div class="t" style="right:394.50px;top:392.25px;color:#c0c0c0;font-size:10px;line-height:14px;text-align:right;">涨停数</div>
<div class="t" style="right:349.50px;top:392.25px;color:#c0c0c0;font-size:10px;line-height:14px;text-align:right;">跌停数</div>
<div class="t" style="right:297.75px;top:392.25px;color:#c0c0c0;font-size:10px;line-height:14px;text-align:right;">封单额</div>
<div class="t" style="left:910.5px;top:392.25px;color:#c0c0c0;font-size:10px;line-height:14px;">细分行业</div>
<div class="t" style="left:-90.00px;width:200px;top:408.50px;color:#c8c8c8;font-size:11px;line-height:14px;text-align:center;">1</div>
<div class="t" style="left:25px;top:409.00px;color:#e6e6a0;font-size:12px;line-height:14px;">一般零售</div>
<div class="t" style="left:72.2px;top:410.00px;color:#b8c8d8;font-size:9px;line-height:14px;">(行业)</div>
<div class="t" style="right:1040.50px;top:408.50px;color:#ff3c3c;font-size:10.6px;line-height:14px;text-align:right;font-weight:bold;">4.60</div>
<div class="t" style="right:989.25px;top:408.50px;color:#ff3c3c;font-size:10.6px;line-height:14px;text-align:right;font-weight:bold;">1308.93</div>
<div class="t" style="right:950.50px;top:408.50px;color:#ff3c3c;font-size:10.6px;line-height:14px;text-align:right;font-weight:bold;">1.31</div>
<div class="t" style="right:908.25px;top:408.50px;color:#ff3c3c;font-size:10.6px;line-height:14px;text-align:right;font-weight:bold;">0.11</div>
<div class="t" style="right:838.75px;top:408.50px;color:#d0d0d0;font-size:10.6px;line-height:14px;text-align:right;font-weight:bold;"><b style="font-size:10.6px">3471.88</b><span style="font-size:12px;font-weight:normal">亿</span></div>
<div class="t" style="right:781.75px;top:408.50px;color:#ff3c3c;font-size:10.6px;line-height:14px;text-align:right;font-weight:bold;">3.84</div>
<div class="t" style="right:736.75px;top:408.50px;color:#d0d0d0;font-size:10.6px;line-height:14px;text-align:right;font-weight:bold;">8.73</div>
<div class="b" style="left:514.0px;top:415.0px;width:6px;height:1px;background:#c0c0c0;"></div>
<div class="t" style="right:622.50px;top:408.50px;color:#ff3c3c;font-size:10.6px;line-height:14px;text-align:right;font-weight:bold;"><b style="font-size:10.6px">38.67</b><span style="font-size:12px;font-weight:normal">亿</span></div>
<div class="t" style="right:559.50px;top:408.50px;color:#ff3c3c;font-size:10.6px;line-height:14px;text-align:right;font-weight:bold;">1.18</div>
<div class="t" style="right:496.25px;top:408.50px;color:#20c8e8;font-size:10.6px;line-height:14px;text-align:right;font-weight:bold;"><b style="font-size:10.6px">2.5</b><span style="font-size:12px;font-weight:normal">亿</span></div>
<div class="t" style="right:439.25px;top:408.50px;color:#d0d0d0;font-size:10.6px;line-height:14px;text-align:right;font-weight:bold;">37/4</div>
<div class="t" style="right:394.50px;top:408.50px;color:#d040f0;font-size:10.6px;line-height:14px;text-align:right;font-weight:bold;">9</div>
<div class="t" style="right:349.50px;top:408.50px;color:#00d800;font-size:10.6px;line-height:14px;text-align:right;font-weight:bold;">0</div>
<div class="b" style="left:896.2px;top:415.0px;width:6px;height:1px;background:#c0c0c0;"></div>
<div class="t" style="left:-90.00px;width:200px;top:425.00px;color:#c8c8c8;font-size:11px;line-height:14px;text-align:center;">2</div>
<div class="t" style="left:25px;top:425.50px;color:#e6e6a0;font-size:12px;line-height:14px;">航天装备</div>
<div class="t" style="left:72.2px;top:426.50px;color:#b8c8d8;font-size:9px;line-height:14px;">(行业)</div>
<div class="t" style="right:1040.50px;top:425.00px;color:#ff3c3c;font-size:10.6px;line-height:14px;text-align:right;font-weight:bold;">3.13</div>
<div class="t" style="right:989.25px;top:425.00px;color:#ff3c3c;font-size:10.6px;line-height:14px;text-align:right;font-weight:bold;">1762.62</div>
<div class="t" style="right:950.50px;top:425.00px;color:#ff3c3c;font-size:10.6px;line-height:14px;text-align:right;font-weight:bold;">1.52</div>
<div class="t" style="right:908.25px;top:425.00px;color:#ff3c3c;font-size:10.6px;line-height:14px;text-align:right;font-weight:bold;">0.03</div>
<div class="t" style="right:838.75px;top:425.00px;color:#d0d0d0;font-size:10.6px;line-height:14px;text-align:right;font-weight:bold;"><b style="font-size:10.6px">2577.44</b><span style="font-size:12px;font-weight:normal">亿</span></div>
<div class="t" style="right:781.75px;top:425.00px;color:#ff3c3c;font-size:10.6px;line-height:14px;text-align:right;font-weight:bold;">7.40</div>
<div class="t" style="right:736.75px;top:425.00px;color:#d0d0d0;font-size:10.6px;line-height:14px;text-align:right;font-weight:bold;">9.99</div>
<div class="t" style="right:680.00px;top:425.00px;color:#d0d0d0;font-size:10.6px;line-height:14px;text-align:right;font-weight:bold;">1059.64</div>
<div class="t" style="right:622.50px;top:425.00px;color:#ff3c3c;font-size:10.6px;line-height:14px;text-align:right;font-weight:bold;"><b style="font-size:10.6px">2.69</b><span style="font-size:12px;font-weight:normal">亿</span></div>
<div class="t" style="right:559.50px;top:425.00px;color:#ff3c3c;font-size:10.6px;line-height:14px;text-align:right;font-weight:bold;">0.11</div>
<div class="t" style="right:496.25px;top:425.00px;color:#20c8e8;font-size:10.6px;line-height:14px;text-align:right;font-weight:bold;"><b style="font-size:10.6px">1.6</b><span style="font-size:12px;font-weight:normal">亿</span></div>
<div class="t" style="right:439.25px;top:425.00px;color:#d0d0d0;font-size:10.6px;line-height:14px;text-align:right;font-weight:bold;">2/6</div>
<div class="t" style="right:394.50px;top:425.00px;color:#ff3c3c;font-size:10.6px;line-height:14px;text-align:right;font-weight:bold;">1</div>
<div class="t" style="right:349.50px;top:425.00px;color:#00d800;font-size:10.6px;line-height:14px;text-align:right;font-weight:bold;">0</div>
<div class="b" style="left:896.2px;top:431.5px;width:6px;height:1px;background:#c0c0c0;"></div>
<div class="t" style="left:-90.00px;width:200px;top:441.50px;color:#c8c8c8;font-size:11px;line-height:14px;text-align:center;">3</div>
<div class="t" style="left:25px;top:442.00px;color:#e6e6a0;font-size:12px;line-height:14px;">酒店餐饮</div>
<div class="t" style="left:72.2px;top:443.00px;color:#b8c8d8;font-size:9px;line-height:14px;">(行业)</div>
<div class="t" style="right:1040.50px;top:441.50px;color:#ff3c3c;font-size:10.6px;line-height:14px;text-align:right;font-weight:bold;">2.69</div>
<div class="t" style="right:989.25px;top:441.50px;color:#ff3c3c;font-size:10.6px;line-height:14px;text-align:right;font-weight:bold;">691.45</div>
<div class="t" style="right:950.50px;top:441.50px;color:#ff3c3c;font-size:10.6px;line-height:14px;text-align:right;font-weight:bold;">1.19</div>
<div class="t" style="right:908.25px;top:441.50px;color:#00d800;font-size:10.6px;line-height:14px;text-align:right;font-weight:bold;">-0.06</div>
<div class="t" style="right:838.75px;top:441.50px;color:#d0d0d0;font-size:10.6px;line-height:14px;text-align:right;font-weight:bold;"><b style="font-size:10.6px">660.04</b><span style="font-size:12px;font-weight:normal">亿</span></div>
<div class="t" style="right:781.75px;top:441.50px;color:#ff3c3c;font-size:10.6px;line-height:14px;text-align:right;font-weight:bold;">3.47</div>
<div class="t" style="right:736.75px;top:441.50px;color:#d0d0d0;font-size:10.6px;line-height:14px;text-align:right;font-weight:bold;">3.52</div>
<div class="t" style="right:680.00px;top:441.50px;color:#d0d0d0;font-size:10.6px;line-height:14px;text-align:right;font-weight:bold;">62.98</div>
<div class="t" style="right:622.50px;top:441.50px;color:#00d800;font-size:10.6px;line-height:14px;text-align:right;font-weight:bold;"><b style="font-size:10.6px">-3389</b><span style="font-size:12px;font-weight:normal">万</span></div>
<div class="t" style="right:559.50px;top:441.50px;color:#00d800;font-size:10.6px;line-height:14px;text-align:right;font-weight:bold;">-0.05</div>
<div class="t" style="right:496.25px;top:441.50px;color:#20c8e8;font-size:10.6px;line-height:14px;text-align:right;font-weight:bold;"><b style="font-size:10.6px">0.2</b><span style="font-size:12px;font-weight:normal">亿</span></div>
<div class="t" style="right:439.25px;top:441.50px;color:#d0d0d0;font-size:10.6px;line-height:14px;text-align:right;font-weight:bold;">9/0</div>
<div class="t" style="right:394.50px;top:441.50px;color:#ff3c3c;font-size:10.6px;line-height:14px;text-align:right;font-weight:bold;">0</div>
<div class="t" style="right:349.50px;top:441.50px;color:#00d800;font-size:10.6px;line-height:14px;text-align:right;font-weight:bold;">0</div>
<div class="b" style="left:896.2px;top:448.0px;width:6px;height:1px;background:#c0c0c0;"></div>
<div class="t" style="left:-90.00px;width:200px;top:458.00px;color:#c8c8c8;font-size:11px;line-height:14px;text-align:center;">4</div>
<div class="t" style="left:25px;top:458.50px;color:#e6e6a0;font-size:12px;line-height:14px;">林业</div>
<div class="t" style="left:48.6px;top:459.50px;color:#b8c8d8;font-size:9px;line-height:14px;">(行业)</div>
<div class="t" style="right:1040.50px;top:458.00px;color:#ff3c3c;font-size:10.6px;line-height:14px;text-align:right;font-weight:bold;">1.74</div>
<div class="t" style="right:989.25px;top:458.00px;color:#ff3c3c;font-size:10.6px;line-height:14px;text-align:right;font-weight:bold;">2642.37</div>
<div class="t" style="right:950.50px;top:458.00px;color:#ff3c3c;font-size:10.6px;line-height:14px;text-align:right;font-weight:bold;">1.08</div>
<div class="t" style="right:908.25px;top:458.00px;color:#00d800;font-size:10.6px;line-height:14px;text-align:right;font-weight:bold;">-0.43</div>
<div class="t" style="right:838.75px;top:458.00px;color:#d0d0d0;font-size:10.6px;line-height:14px;text-align:right;font-weight:bold;"><b style="font-size:10.6px">372.39</b><span style="font-size:12px;font-weight:normal">亿</span></div>
<div class="t" style="right:781.75px;top:458.00px;color:#ff3c3c;font-size:10.6px;line-height:14px;text-align:right;font-weight:bold;">13.67</div>
<div class="t" style="right:736.75px;top:458.00px;color:#d040f0;font-size:10.6px;line-height:14px;text-align:right;font-weight:bold;">21.30</div>
<div class="b" style="left:514.0px;top:464.5px;width:6px;height:1px;background:#c0c0c0;"></div>
<div class="t" style="right:622.50px;top:458.00px;color:#00d800;font-size:10.6px;line-height:14px;text-align:right;font-weight:bold;"><b style="font-size:10.6px">-7.32</b><span style="font-size:12px;font-weight:normal">亿</span></div>
<div class="t" style="right:559.50px;top:458.00px;color:#00d800;font-size:10.6px;line-height:14px;text-align:right;font-weight:bold;">-1.99</div>
<div class="t" style="right:496.25px;top:458.00px;color:#20c8e8;font-size:10.6px;line-height:14px;text-align:right;font-weight:bold;"><b style="font-size:10.6px">2.1</b><span style="font-size:12px;font-weight:normal">亿</span></div>
<div class="t" style="right:439.25px;top:458.00px;color:#d0d0d0;font-size:10.6px;line-height:14px;text-align:right;font-weight:bold;">1/3</div>
<div class="t" style="right:394.50px;top:458.00px;color:#ff3c3c;font-size:10.6px;line-height:14px;text-align:right;font-weight:bold;">0</div>
<div class="t" style="right:349.50px;top:458.00px;color:#00d800;font-size:10.6px;line-height:14px;text-align:right;font-weight:bold;">0</div>
<div class="b" style="left:896.2px;top:464.5px;width:6px;height:1px;background:#c0c0c0;"></div>
<div class="t" style="left:-90.00px;width:200px;top:474.50px;color:#c8c8c8;font-size:11px;line-height:14px;text-align:center;">5</div>
<div class="t" style="left:25px;top:475.00px;color:#e6e6a0;font-size:12px;line-height:14px;">免税概念</div>
<div class="t" style="left:72.2px;top:476.00px;color:#b8c8d8;font-size:9px;line-height:14px;">(概念)</div>
<div class="t" style="right:1040.50px;top:474.50px;color:#ff3c3c;font-size:10.6px;line-height:14px;text-align:right;font-weight:bold;">1.23</div>
<div class="t" style="right:989.25px;top:474.50px;color:#ff3c3c;font-size:10.6px;line-height:14px;text-align:right;font-weight:bold;">1372.48</div>
<div class="t" style="right:950.50px;top:474.50px;color:#ff3c3c;font-size:10.6px;line-height:14px;text-align:right;font-weight:bold;">1.10</div>
<div class="t" style="right:908.25px;top:474.50px;color:#ff3c3c;font-size:10.6px;line-height:14px;text-align:right;font-weight:bold;">0.07</div>
<div class="t" style="right:838.75px;top:474.50px;color:#d0d0d0;font-size:10.6px;line-height:14px;text-align:right;font-weight:bold;"><b style="font-size:10.6px">10935.45</b><span style="font-size:12px;font-weight:normal">亿</span></div>
<div class="t" style="right:781.75px;top:474.50px;color:#ff3c3c;font-size:10.6px;line-height:14px;text-align:right;font-weight:bold;">1.00</div>
<div class="t" style="right:736.75px;top:474.50px;color:#d0d0d0;font-size:10.6px;line-height:14px;text-align:right;font-weight:bold;">3.09</div>
<div class="t" style="right:680.00px;top:474.50px;color:#d0d0d0;font-size:10.6px;line-height:14px;text-align:right;font-weight:bold;">141.42</div>
<div class="t" style="right:622.50px;top:474.50px;color:#00d800;font-size:10.6px;line-height:14px;text-align:right;font-weight:bold;"><b style="font-size:10.6px">-6.58</b><span style="font-size:12px;font-weight:normal">亿</span></div>
<div class="t" style="right:559.50px;top:474.50px;color:#00d800;font-size:10.6px;line-height:14px;text-align:right;font-weight:bold;">-0.06</div>
<div class="t" style="right:496.25px;top:474.50px;color:#20c8e8;font-size:10.6px;line-height:14px;text-align:right;font-weight:bold;"><b style="font-size:10.6px">5.0</b><span style="font-size:12px;font-weight:normal">亿</span></div>
<div class="t" style="right:439.25px;top:474.50px;color:#d0d0d0;font-size:10.6px;line-height:14px;text-align:right;font-weight:bold;">27/22</div>
<div class="t" style="right:394.50px;top:474.50px;color:#d040f0;font-size:10.6px;line-height:14px;text-align:right;font-weight:bold;">5</div>
<div class="t" style="right:349.50px;top:474.50px;color:#00d800;font-size:10.6px;line-height:14px;text-align:right;font-weight:bold;">0</div>
<div class="b" style="left:896.2px;top:481.0px;width:6px;height:1px;background:#c0c0c0;"></div>
<div class="t" style="left:-90.00px;width:200px;top:491.00px;color:#c8c8c8;font-size:11px;line-height:14px;text-align:center;">6</div>
<div class="t" style="left:25px;top:491.50px;color:#e6e6a0;font-size:12px;line-height:14px;">教育培训</div>
<div class="t" style="left:72.2px;top:492.50px;color:#b8c8d8;font-size:9px;line-height:14px;">(行业)</div>
<div class="t" style="right:1040.50px;top:491.00px;color:#ff3c3c;font-size:10.6px;line-height:14px;text-align:right;font-weight:bold;">1.21</div>
<div class="t" style="right:989.25px;top:491.00px;color:#ff3c3c;font-size:10.6px;line-height:14px;text-align:right;font-weight:bold;">825.72</div>
<div class="t" style="right:950.50px;top:491.00px;color:#ff3c3c;font-size:10.6px;line-height:14px;text-align:right;font-weight:bold;">1.08</div>
<div class="t" style="right:908.25px;top:491.00px;color:#00d800;font-size:10.6px;line-height:14px;text-align:right;font-weight:bold;">-0.06</div>
<div class="t" style="right:838.75px;top:491.00px;color:#d0d0d0;font-size:10.6px;line-height:14px;text-align:right;font-weight:bold;"><b style="font-size:10.6px">1125.39</b><span style="font-size:12px;font-weight:normal">亿</span></div>
<div class="t" style="right:781.75px;top:491.00px;color:#ff3c3c;font-size:10.6px;line-height:14px;text-align:right;font-weight:bold;">0.65</div>
<div class="t" style="right:736.75px;top:491.00px;color:#d0d0d0;font-size:10.6px;line-height:14px;text-align:right;font-weight:bold;">4.17</div>
<div class="b" style="left:514.0px;top:497.5px;width:6px;height:1px;background:#c0c0c0;"></div>
<div class="t" style="right:622.50px;top:491.00px;color:#ff3c3c;font-size:10.6px;line-height:14px;text-align:right;font-weight:bold;"><b style="font-size:10.6px">4.71</b><span style="font-size:12px;font-weight:normal">亿</span></div>
<div class="t" style="right:559.50px;top:491.00px;color:#ff3c3c;font-size:10.6px;line-height:14px;text-align:right;font-weight:bold;">0.44</div>
<div class="t" style="right:496.25px;top:491.00px;color:#20c8e8;font-size:10.6px;line-height:14px;text-align:right;font-weight:bold;"><b style="font-size:10.6px">0.3</b><span style="font-size:12px;font-weight:normal">亿</span></div>
<div class="t" style="right:439.25px;top:491.00px;color:#d0d0d0;font-size:10.6px;line-height:14px;text-align:right;font-weight:bold;">8/8</div>
<div class="t" style="right:394.50px;top:491.00px;color:#ff3c3c;font-size:10.6px;line-height:14px;text-align:right;font-weight:bold;">1</div>
<div class="t" style="right:349.50px;top:491.00px;color:#00d800;font-size:10.6px;line-height:14px;text-align:right;font-weight:bold;">0</div>
<div class="b" style="left:896.2px;top:497.5px;width:6px;height:1px;background:#c0c0c0;"></div>
<div class="t" style="left:-90.00px;width:200px;top:507.50px;color:#c8c8c8;font-size:11px;line-height:14px;text-align:center;">7</div>
<div class="t" style="left:25px;top:508.00px;color:#e6e6a0;font-size:12px;line-height:14px;">汽车服务</div>
<div class="t" style="left:72.2px;top:509.00px;color:#b8c8d8;font-size:9px;line-height:14px;">(行业)</div>
<div class="t" style="right:1040.50px;top:507.50px;color:#ff3c3c;font-size:10.6px;line-height:14px;text-align:right;font-weight:bold;">1.20</div>
<div class="t" style="right:989.25px;top:507.50px;color:#ff3c3c;font-size:10.6px;line-height:14px;text-align:right;font-weight:bold;">648.71</div>
<div class="t" style="right:950.50px;top:507.50px;color:#ff3c3c;font-size:10.6px;line-height:14px;text-align:right;font-weight:bold;">1.49</div>
<div class="t" style="right:908.25px;top:507.50px;color:#ff3c3c;font-size:10.6px;line-height:14px;text-align:right;font-weight:bold;">0.04</div>
<div class="t" style="right:838.75px;top:507.50px;color:#d0d0d0;font-size:10.6px;line-height:14px;text-align:right;font-weight:bold;"><b style="font-size:10.6px">539.85</b><span style="font-size:12px;font-weight:normal">亿</span></div>
<div class="t" style="right:781.75px;top:507.50px;color:#ff3c3c;font-size:10.6px;line-height:14px;text-align:right;font-weight:bold;">0.76</div>
<div class="t" style="right:736.75px;top:507.50px;color:#d0d0d0;font-size:10.6px;line-height:14px;text-align:right;font-weight:bold;">1.59</div>
<div class="t" style="right:680.00px;top:507.50px;color:#d0d0d0;font-size:10.6px;line-height:14px;text-align:right;font-weight:bold;">40.69</div>
<div class="t" style="right:622.50px;top:507.50px;color:#00d800;font-size:10.6px;line-height:14px;text-align:right;font-weight:bold;"><b style="font-size:10.6px">-95.9</b><span style="font-size:12px;font-weight:normal">万</span></div>
<div class="t" style="right:559.50px;top:507.50px;color:#00d800;font-size:10.6px;line-height:14px;text-align:right;font-weight:bold;">-0.00</div>
<div class="t" style="right:496.25px;top:507.50px;color:#20c8e8;font-size:10.6px;line-height:14px;text-align:right;font-weight:bold;"><b style="font-size:10.6px">0.1</b><span style="font-size:12px;font-weight:normal">亿</span></div>
<div class="t" style="right:439.25px;top:507.50px;color:#d0d0d0;font-size:10.6px;line-height:14px;text-align:right;font-weight:bold;">3/6</div>
<div class="t" style="right:394.50px;top:507.50px;color:#ff3c3c;font-size:10.6px;line-height:14px;text-align:right;font-weight:bold;">0</div>
<div class="t" style="right:349.50px;top:507.50px;color:#00d800;font-size:10.6px;line-height:14px;text-align:right;font-weight:bold;">0</div>
<div class="b" style="left:896.2px;top:514.0px;width:6px;height:1px;background:#c0c0c0;"></div>
<div class="t" style="left:-90.00px;width:200px;top:524.00px;color:#c8c8c8;font-size:11px;line-height:14px;text-align:center;">8</div>
<div class="t" style="left:25px;top:524.50px;color:#e6e6a0;font-size:12px;line-height:14px;">房产服务</div>
<div class="t" style="left:72.2px;top:525.50px;color:#b8c8d8;font-size:9px;line-height:14px;">(行业)</div>
<div class="t" style="right:1040.50px;top:524.00px;color:#ff3c3c;font-size:10.6px;line-height:14px;text-align:right;font-weight:bold;">1.01</div>
<div class="t" style="right:989.25px;top:524.00px;color:#ff3c3c;font-size:10.6px;line-height:14px;text-align:right;font-weight:bold;">854.15</div>
<div class="t" style="right:950.50px;top:524.00px;color:#00d800;font-size:10.6px;line-height:14px;text-align:right;font-weight:bold;">0.94</div>
<div class="t" style="right:908.25px;top:524.00px;color:#00d800;font-size:10.6px;line-height:14px;text-align:right;font-weight:bold;">-0.05</div>
<div class="t" style="right:838.75px;top:524.00px;color:#d0d0d0;font-size:10.6px;line-height:14px;text-align:right;font-weight:bold;"><b style="font-size:10.6px">462.16</b><span style="font-size:12px;font-weight:normal">亿</span></div>
<div class="t" style="right:781.75px;top:524.00px;color:#00d800;font-size:10.6px;line-height:14px;text-align:right;font-weight:bold;">-2.26</div>
<div class="t" style="right:736.75px;top:524.00px;color:#d0d0d0;font-size:10.6px;line-height:14px;text-align:right;font-weight:bold;">4.31</div>
<div class="t" style="right:680.00px;top:524.00px;color:#d0d0d0;font-size:10.6px;line-height:14px;text-align:right;font-weight:bold;">3239.60</div>
<div class="t" style="right:622.50px;top:524.00px;color:#ff3c3c;font-size:10.6px;line-height:14px;text-align:right;font-weight:bold;"><b style="font-size:10.6px">2.04</b><span style="font-size:12px;font-weight:normal">亿</span></div>
<div class="t" style="right:559.50px;top:524.00px;color:#ff3c3c;font-size:10.6px;line-height:14px;text-align:right;font-weight:bold;">0.45</div>
<div class="t" style="right:496.25px;top:524.00px;color:#20c8e8;font-size:10.6px;line-height:14px;text-align:right;font-weight:bold;"><b style="font-size:10.6px">0.2</b><span style="font-size:12px;font-weight:normal">亿</span></div>
<div class="t" style="right:439.25px;top:524.00px;color:#d0d0d0;font-size:10.6px;line-height:14px;text-align:right;font-weight:bold;">3/6</div>
<div class="t" style="right:394.50px;top:524.00px;color:#ff3c3c;font-size:10.6px;line-height:14px;text-align:right;font-weight:bold;">1</div>
<div class="t" style="right:349.50px;top:524.00px;color:#00d800;font-size:10.6px;line-height:14px;text-align:right;font-weight:bold;">0</div>
<div class="b" style="left:896.2px;top:530.5px;width:6px;height:1px;background:#c0c0c0;"></div>
<div class="t" style="left:-90.00px;width:200px;top:540.50px;color:#c8c8c8;font-size:11px;line-height:14px;text-align:center;">9</div>
<div class="t" style="left:25px;top:541.00px;color:#e6e6a0;font-size:12px;line-height:14px;">胎压监测</div>
<div class="t" style="left:72.2px;top:542.00px;color:#b8c8d8;font-size:9px;line-height:14px;">(概念)</div>
<div class="t" style="right:1040.50px;top:540.50px;color:#ff3c3c;font-size:10.6px;line-height:14px;text-align:right;font-weight:bold;">0.99</div>
<div class="t" style="right:989.25px;top:540.50px;color:#ff3c3c;font-size:10.6px;line-height:14px;text-align:right;font-weight:bold;">2354.84</div>
<div class="t" style="right:950.50px;top:540.50px;color:#ff3c3c;font-size:10.6px;line-height:14px;text-align:right;font-weight:bold;">1.60</div>
<div class="t" style="right:908.25px;top:540.50px;color:#ff3c3c;font-size:10.6px;line-height:14px;text-align:right;font-weight:bold;">0.01</div>
<div class="t" style="right:838.75px;top:540.50px;color:#d0d0d0;font-size:10.6px;line-height:14px;text-align:right;font-weight:bold;"><b style="font-size:10.6px">3665.64</b><span style="font-size:12px;font-weight:normal">亿</span></div>
<div class="t" style="right:781.75px;top:540.50px;color:#ff3c3c;font-size:10.6px;line-height:14px;text-align:right;font-weight:bold;">1.04</div>
<div class="t" style="right:736.75px;top:540.50px;color:#d0d0d0;font-size:10.6px;line-height:14px;text-align:right;font-weight:bold;">3.70</div>
<div class="t" style="right:680.00px;top:540.50px;color:#d0d0d0;font-size:10.6px;line-height:14px;text-align:right;font-weight:bold;">44.23</div>
<div class="t" style="right:622.50px;top:540.50px;color:#ff3c3c;font-size:10.6px;line-height:14px;text-align:right;font-weight:bold;"><b style="font-size:10.6px">2.59</b><span style="font-size:12px;font-weight:normal">亿</span></div>
<div class="t" style="right:559.50px;top:540.50px;color:#ff3c3c;font-size:10.6px;line-height:14px;text-align:right;font-weight:bold;">0.07</div>
<div class="t" style="right:496.25px;top:540.50px;color:#20c8e8;font-size:10.6px;line-height:14px;text-align:right;font-weight:bold;"><b style="font-size:10.6px">0.9</b><span style="font-size:12px;font-weight:normal">亿</span></div>
<div class="t" style="right:439.25px;top:540.50px;color:#d0d0d0;font-size:10.6px;line-height:14px;text-align:right;font-weight:bold;">14/15</div>
<div class="t" style="right:394.50px;top:540.50px;color:#ff3c3c;font-size:10.6px;line-height:14px;text-align:right;font-weight:bold;">3</div>
<div class="t" style="right:349.50px;top:540.50px;color:#00d800;font-size:10.6px;line-height:14px;text-align:right;font-weight:bold;">0</div>
<div class="b" style="left:896.2px;top:547.0px;width:6px;height:1px;background:#c0c0c0;"></div>
<div class="t" style="left:-90.00px;width:200px;top:557.00px;color:#c8c8c8;font-size:11px;line-height:14px;text-align:center;">10</div>
<div class="t" style="left:25px;top:557.50px;color:#e6e6a0;font-size:12px;line-height:14px;">动物保健</div>
<div class="t" style="left:72.2px;top:558.50px;color:#b8c8d8;font-size:9px;line-height:14px;">(行业)</div>
<div class="t" style="right:1040.50px;top:557.00px;color:#ff3c3c;font-size:10.6px;line-height:14px;text-align:right;font-weight:bold;">0.98</div>
<div class="t" style="right:989.25px;top:557.00px;color:#ff3c3c;font-size:10.6px;line-height:14px;text-align:right;font-weight:bold;">874.83</div>
<div class="t" style="right:950.50px;top:557.00px;color:#00d800;font-size:10.6px;line-height:14px;text-align:right;font-weight:bold;">0.93</div>
<div class="t" style="right:908.25px;top:557.00px;color:#ff3c3c;font-size:10.6px;line-height:14px;text-align:right;font-weight:bold;">0.22</div>
<div class="t" style="right:838.75px;top:557.00px;color:#d0d0d0;font-size:10.6px;line-height:14px;text-align:right;font-weight:bold;"><b style="font-size:10.6px">795.74</b><span style="font-size:12px;font-weight:normal">亿</span></div>
<div class="t" style="right:781.75px;top:557.00px;color:#ff3c3c;font-size:10.6px;line-height:14px;text-align:right;font-weight:bold;">3.14</div>
<div class="t" style="right:736.75px;top:557.00px;color:#d0d0d0;font-size:10.6px;line-height:14px;text-align:right;font-weight:bold;">2.14</div>
<div class="t" style="right:680.00px;top:557.00px;color:#d0d0d0;font-size:10.6px;line-height:14px;text-align:right;font-weight:bold;">52.86</div>
<div class="t" style="right:622.50px;top:557.00px;color:#00d800;font-size:10.6px;line-height:14px;text-align:right;font-weight:bold;"><b style="font-size:10.6px">-2659</b><span style="font-size:12px;font-weight:normal">万</span></div>
<div class="t" style="right:559.50px;top:557.00px;color:#00d800;font-size:10.6px;line-height:14px;text-align:right;font-weight:bold;">-0.04</div>
<div class="t" style="right:496.25px;top:557.00px;color:#20c8e8;font-size:10.6px;line-height:14px;text-align:right;font-weight:bold;"><b style="font-size:10.6px">0.3</b><span style="font-size:12px;font-weight:normal">亿</span></div>
<div class="t" style="right:439.25px;top:557.00px;color:#d0d0d0;font-size:10.6px;line-height:14px;text-align:right;font-weight:bold;">5/8</div>
<div class="t" style="right:394.50px;top:557.00px;color:#ff3c3c;font-size:10.6px;line-height:14px;text-align:right;font-weight:bold;">0</div>
<div class="t" style="right:349.50px;top:557.00px;color:#00d800;font-size:10.6px;line-height:14px;text-align:right;font-weight:bold;">0</div>
<div class="b" style="left:896.2px;top:563.5px;width:6px;height:1px;background:#c0c0c0;"></div>
<div class="t" style="left:-90.00px;width:200px;top:573.50px;color:#c8c8c8;font-size:11px;line-height:14px;text-align:center;">11</div>
<div class="t" style="left:25px;top:574.00px;color:#e6e6a0;font-size:12px;line-height:14px;">次新预增</div>
<div class="t" style="left:72.2px;top:575.00px;color:#b8c8d8;font-size:9px;line-height:14px;">(风格)</div>
<div class="t" style="right:1040.50px;top:573.50px;color:#ff3c3c;font-size:10.6px;line-height:14px;text-align:right;font-weight:bold;">0.91</div>
<div class="t" style="right:989.25px;top:573.50px;color:#ff3c3c;font-size:10.6px;line-height:14px;text-align:right;font-weight:bold;">2031.90</div>
<div class="t" style="right:950.50px;top:573.50px;color:#ff3c3c;font-size:10.6px;line-height:14px;text-align:right;font-weight:bold;">1.36</div>
<div class="t" style="right:908.25px;top:573.50px;color:#00d800;font-size:10.6px;line-height:14px;text-align:right;font-weight:bold;">-0.01</div>
<div class="t" style="right:838.75px;top:573.50px;color:#d0d0d0;font-size:10.6px;line-height:14px;text-align:right;font-weight:bold;"><b style="font-size:10.6px">287.37</b><span style="font-size:12px;font-weight:normal">亿</span></div>
<div class="t" style="right:781.75px;top:573.50px;color:#ff3c3c;font-size:10.6px;line-height:14px;text-align:right;font-weight:bold;">1.45</div>
<div class="t" style="right:736.75px;top:573.50px;color:#d0d0d0;font-size:10.6px;line-height:14px;text-align:right;font-weight:bold;">7.69</div>
<div class="t" style="right:680.00px;top:573.50px;color:#d0d0d0;font-size:10.6px;line-height:14px;text-align:right;font-weight:bold;">73.95</div>
<div class="t" style="right:622.50px;top:573.50px;color:#ff3c3c;font-size:10.6px;line-height:14px;text-align:right;font-weight:bold;"><b style="font-size:10.6px">1615</b><span style="font-size:12px;font-weight:normal">万</span></div>
<div class="t" style="right:559.50px;top:573.50px;color:#ff3c3c;font-size:10.6px;line-height:14px;text-align:right;font-weight:bold;">0.26</div>
<div class="t" style="right:496.25px;top:573.50px;color:#20c8e8;font-size:10.6px;line-height:14px;text-align:right;font-weight:bold;"><b style="font-size:10.6px">0.1</b><span style="font-size:12px;font-weight:normal">亿</span></div>
<div class="t" style="right:439.25px;top:573.50px;color:#d0d0d0;font-size:10.6px;line-height:14px;text-align:right;font-weight:bold;">2/2</div>
<div class="t" style="right:394.50px;top:573.50px;color:#ff3c3c;font-size:10.6px;line-height:14px;text-align:right;font-weight:bold;">0</div>
<div class="t" style="right:349.50px;top:573.50px;color:#00d800;font-size:10.6px;line-height:14px;text-align:right;font-weight:bold;">0</div>
<div class="b" style="left:896.2px;top:580.0px;width:6px;height:1px;background:#c0c0c0;"></div>
<div class="b" style="left:1014px;top:390px;width:11px;height:207px;background:#000;"></div>
<div class="b" style="left:1014px;top:391px;width:9px;height:11px;border:1px solid #3c3c3c;background:#0c0c0c;"></div>
<svg class="b" style="left:1014px;top:391px" width="11" height="13"><path d="M2.7 7.8 L5.5 5 L8.3 7.8Z" fill="#8a8a8a"/></svg>
<div class="b" style="left:1014px;top:404px;width:10px;height:28px;background:#484848;"></div>
<div class="b" style="left:1003px;top:598px;width:9px;height:10px;border:1px solid #606060;"></div><svg class="b" style="left:1003px;top:598px" width="11" height="12"><path d="M4 3 L7 6 L4 9Z" fill="#808080"/></svg>
<div class="b" style="left:1014px;top:598px;width:9px;height:10px;border:1px solid #606060;"></div><svg class="b" style="left:1014px;top:598px" width="11" height="12"><path d="M2.5 4.5 L5.5 7.5 L8.5 4.5Z" fill="#808080"/></svg>
<div class="b" style="left:-1px;top:597px;width:13px;height:12px;border:1px solid #a00000;"></div>
<svg class="b" style="left:0;top:597px" width="13" height="13"><path d="M0 6.5 H6" stroke="#b8b8b8" stroke-width="1.2"/><path d="M6 3.5 V9.5" stroke="#b8b8b8" stroke-width="1.5"/><path d="M7 5 H10 V8 H7Z" fill="#a8a8a8"/></svg>
<svg class="b" style="left:0;top:597px" width="200" height="13"><path d="M14.6 0.5 H67.9 L62.5 12.5 H20 Z" fill="#c00000"/><path d="M69 0.5 H103.5 L106 6.5 L103 12.5 H69 L66.5 6.5 Z" fill="#a0a0a0"/><path d="M105 0.5 H147 L142 12.5 H110 L107 6.5 Z" fill="#a0a0a0"/><rect x="159" y="0.5" width="30" height="12" fill="#505050"/><rect x="149.5" y="0.5" width="9.5" height="11.5" fill="#101010" stroke="#505050"/><path d="M155.5 3.5 L152.5 6.5 L155.5 9.5Z" fill="#b0b0b0"/></svg>
<div class="t" style="left:-59.00px;width:200px;top:596.60px;color:#ffffff;font-size:9.5px;line-height:14px;text-align:center;font-weight:bold;">关联品种</div>
<div class="t" style="left:-14.00px;width:200px;top:596.60px;color:#181818;font-size:9.5px;line-height:14px;text-align:center;font-weight:bold;">成份股</div>
<div class="t" style="left:26.00px;width:200px;top:596.60px;color:#181818;font-size:9.5px;line-height:14px;text-align:center;font-weight:bold;">自选股</div>
<div class="b" style="left:0;top:610px;width:1025px;height:1px;background:#a00000;"></div>
<div class="b" style="left:0;top:624px;width:1200px;height:1px;background:#c83838;"></div>
<div class="b" style="left:28.3px;top:611px;width:1px;height:12px;background:#a00000;"></div>
<div class="t" style="left:-85.85px;width:200px;top:610.50px;color:#c0c0c0;font-size:9px;line-height:14px;text-align:center;">扩展∨</div>
<div class="b" style="left:70.5px;top:611px;width:1px;height:12px;background:#a00000;"></div>
<div class="t" style="left:-50.10px;width:200px;top:610.50px;color:#30c8d8;font-size:9px;line-height:14px;text-align:center;">关联报价</div>
<div class="b" style="left:112.5px;top:611px;width:1px;height:12px;background:#a00000;"></div>
<div class="t" style="left:-8.00px;width:200px;top:610.50px;color:#c0c0c0;font-size:9px;line-height:14px;text-align:center;">资金流向</div>
<div class="b" style="left:154.3px;top:611px;width:1px;height:12px;background:#a00000;"></div>
<div class="t" style="left:33.90px;width:200px;top:610.50px;color:#d8d800;font-size:9px;line-height:14px;text-align:center;">市场资讯</div>
<div class="b" style="left:0;top:625px;width:1200px;height:14px;background:linear-gradient(#f4f8f8,#ececec 3px,#e8e8e8);"></div>
<div class="t" style="left:-2.5px;top:625.70px;color:#202020;font-size:9px;line-height:14px;font-weight:500;">上证</div>
<div class="t" style="left:17.5px;top:625.70px;color:#109010;font-size:9px;line-height:14px;font-weight:bold;">3824.81</div>
<div class="t" style="left:61.7px;top:625.70px;color:#109010;font-size:9px;line-height:14px;font-weight:bold;">-43.11</div>
<div class="t" style="left:96.3px;top:625.70px;color:#109010;font-size:9px;line-height:14px;font-weight:bold;">-1.11%</div>
<div class="t" style="left:131.7px;top:625.70px;color:#202020;font-size:9.5px;line-height:14px;"><span style="font-size:9px">7333</span>亿</div>
<div class="t" style="left:170px;top:625.70px;color:#202020;font-size:9px;line-height:14px;font-weight:500;">深证</div>
<div class="t" style="left:191.3px;top:625.70px;color:#109010;font-size:9px;line-height:14px;font-weight:bold;">12914.67</div>
<div class="t" style="left:232.3px;top:625.70px;color:#109010;font-size:9px;line-height:14px;font-weight:bold;">-197.42</div>
<div class="t" style="left:269.3px;top:625.70px;color:#109010;font-size:9px;line-height:14px;font-weight:bold;">-1.51%</div>
<div class="t" style="left:303.3px;top:625.70px;color:#202020;font-size:9.5px;line-height:14px;"><span style="font-size:9px">9909</span>亿</div>
<div class="t" style="left:343.3px;top:625.70px;color:#202020;font-size:9px;line-height:14px;font-weight:500;">北证</div>
<div class="t" style="left:363.3px;top:625.70px;color:#e81010;font-size:9px;line-height:14px;font-weight:bold;">1439.65</div>
<div class="t" style="left:413.3px;top:625.70px;color:#e81010;font-size:9px;line-height:14px;font-weight:bold;">7.70</div>
<div class="t" style="left:441.7px;top:625.70px;color:#e81010;font-size:9px;line-height:14px;font-weight:bold;">0.54%</div>
<div class="t" style="left:476.7px;top:625.70px;color:#202020;font-size:9.5px;line-height:14px;"><span style="font-size:9px">241.0</span>亿</div>
<div class="t" style="left:516px;top:625.70px;color:#202020;font-size:9px;line-height:14px;font-weight:500;">创业</div>
<div class="t" style="left:536px;top:625.70px;color:#109010;font-size:9px;line-height:14px;font-weight:bold;">3071.76</div>
<div class="t" style="left:580px;top:625.70px;color:#109010;font-size:9px;line-height:14px;font-weight:bold;">-66.04</div>
<div class="t" style="left:615px;top:625.70px;color:#109010;font-size:9px;line-height:14px;font-weight:bold;">-2.10%</div>
<div class="t" style="left:649.3px;top:625.70px;color:#202020;font-size:9.5px;line-height:14px;"><span style="font-size:9px">4533</span>亿</div>
<div class="t" style="left:691px;top:625.70px;color:#202020;font-size:9px;line-height:14px;font-weight:500;">总成交</div>
<div class="t" style="left:730px;top:625.70px;color:#202020;font-size:9.5px;line-height:14px;"><span style="font-size:9px">17483</span>亿</div>
<div class="t" style="left:771px;top:625.70px;color:#202020;font-size:9px;line-height:14px;font-weight:500;">上证云行情V319</div>
<div class="b" style="left:689.3px;top:626px;width:1px;height:12px;background:#a0a0a0;"></div>
<div class="b" style="left:767.7px;top:626px;width:1px;height:12px;background:#a0a0a0;"></div>
<svg class="b" style="left:1120px;top:624px" width="80" height="15"><rect x="4.75" y="4.9" width="10" height="8.5" rx="1.5" fill="#f4f6fa" stroke="#7090d0" stroke-width="1"/><rect x="7.5" y="8.6" width="5" height="1.6" fill="#d0b020"/><rect x="18.6" y="4.9" width="10.4" height="8.5" rx="1" fill="#f0f0f0" stroke="#8c8c8c" stroke-width="1"/><rect x="19" y="5.3" width="9.6" height="1.8" fill="#b8b8b8"/><path d="M35 4.3 H38.8 L41.5 7 V10.8 L38.8 13.5 H35 L32.3 10.8 V7 Z" fill="#d8d030" stroke="#b0a020" stroke-width="0.8"/><path d="M36.9 6.5 V11 M35.2 8.2 L36.9 6.5 L38.6 8.2" stroke="#6a6010" fill="none" stroke-width="1.1"/><path d="M48 12.5 L50.5 9" stroke="#808080" stroke-width="1.2"/><path d="M49 6.5 Q52 3.5 55.5 6.5 Q54 10.5 50 10 Z" fill="#7c7c7c"/><circle cx="53.5" cy="6" r="1.2" fill="#909090"/><path d="M63.9 4.5 L61.6 7.5 H66.2 Z M63.9 7.5 L61.3 10.8 H66.5 Z M63.9 10.5 V13.2" fill="#7a7a7a" stroke="#7a7a7a" stroke-width="0.8"/><path d="M73.3 5.5 V13" stroke="#808080" stroke-width="1.1"/><circle cx="73.3" cy="6.3" r="1.4" fill="#808080"/></svg>
</div></body></html>
